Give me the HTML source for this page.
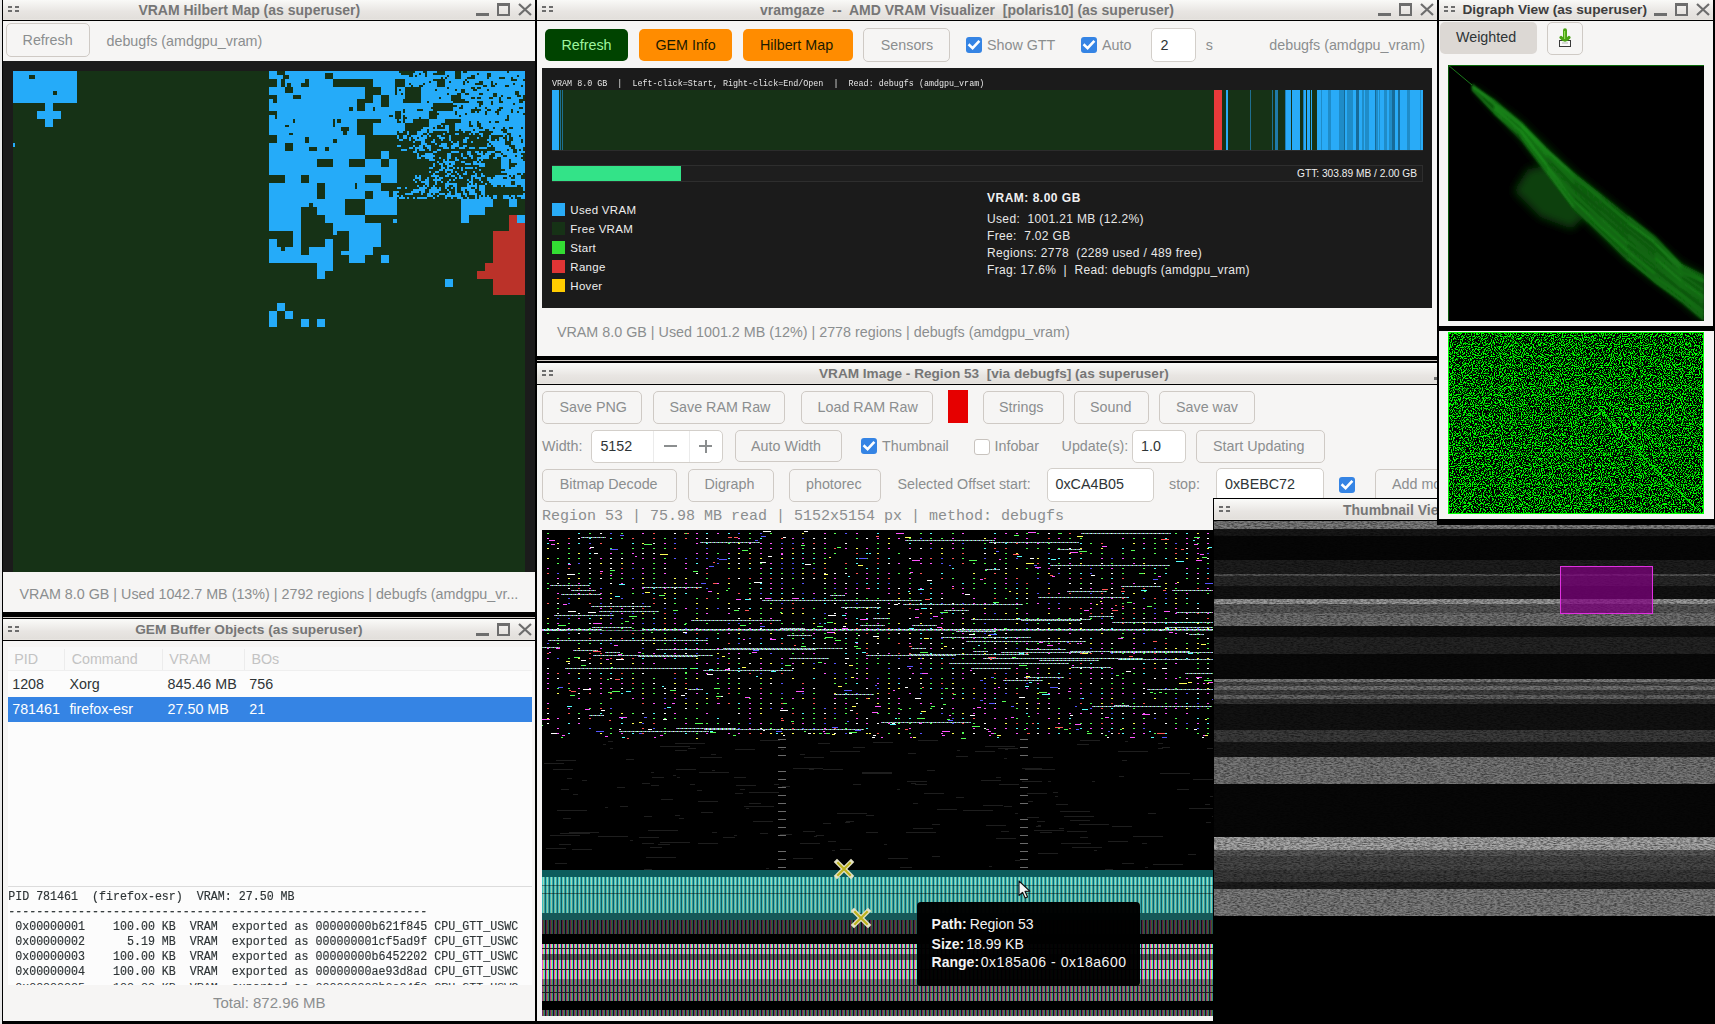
<!DOCTYPE html><html><head><meta charset="utf-8"><style>
html,body{margin:0;padding:0;}
body{width:1715px;height:1024px;overflow:hidden;position:relative;background:#000;font-family:'Liberation Sans',sans-serif;}
.r{position:absolute;}
.t{position:absolute;white-space:pre;line-height:1;}
</style></head><body>
<div class="r" style="left:0px;top:0px;width:2px;height:1024px;background:#e8e8e8;"></div>
<div class="r" style="left:2px;top:0px;width:534px;height:617px;background:#000;"></div>
<div class="r" style="left:3px;top:0px;width:532px;height:612px;background:#f6f5f4;"></div>
<div class="r" style="left:3px;top:-1px;width:532px;height:21px;background:linear-gradient(#fbfbf9,#e8e5e2 60%,#e2dfdb 96%,#efebe7);"></div>
<div class="r" style="left:3px;top:20px;width:532px;height:1px;background:#000;"></div>
<div class="r" style="left:8px;top:6px;width:4px;height:2px;background:#6d6d6d;"></div>
<div class="r" style="left:8px;top:10px;width:4px;height:2px;background:#6d6d6d;"></div>
<div class="r" style="left:15px;top:6px;width:4px;height:2px;background:#6d6d6d;"></div>
<div class="r" style="left:15px;top:10px;width:4px;height:2px;background:#6d6d6d;"></div>
<div class="t" style="left:138.4px;top:2.9px;font-size:14px;color:#767676;font-family:'Liberation Sans', sans-serif;font-weight:bold;">VRAM Hilbert Map (as superuser)</div>
<div class="r" style="left:476px;top:13px;width:13px;height:3px;background:#6d6d6d;"></div>
<div class="r" style="left:497px;top:3px;width:13px;height:13px;box-sizing:border-box;border:2px solid #6d6d6d;border-top-width:3px;"></div>
<svg class="r" style="left:518px;top:3px" width="14" height="13" viewBox="0 0 14 13"><path d="M1 1 L13 12 M13 1 L1 12" stroke="#6d6d6d" stroke-width="2.2"/></svg>
<div class="r" style="left:6px;top:23px;width:84px;height:34px;box-sizing:border-box;border:1px solid #cfcac5;border-radius:5px;background:#f6f5f4;"></div>
<div class="t" style="left:22.6px;top:33.1px;font-size:14.3px;color:#8b8e8f;font-family:'Liberation Sans', sans-serif;">Refresh</div>
<div class="t" style="left:106.5px;top:33.6px;font-size:14.3px;color:#8b8e8f;font-family:'Liberation Sans', sans-serif;">debugfs (amdgpu_vram)</div>
<div class="r" style="left:3px;top:61px;width:532px;height:511px;background:#1b1b1b;"></div>
<svg class="r" style="left:13px;top:71px" width="512" height="501" viewBox="0 0 512 501" shape-rendering="crispEdges"><rect width="512" height="501" fill="#163216"/><path fill="#25abf9" d="M0 0h64v2h-64zM256 0h8v2h-8zM272 0h114v2h-114zM402 0h8v2h-8zM414 0h10v2h-10zM432 0h10v2h-10zM448 0h2v2h-2zM454 0h40v2h-40zM496 0h16v2h-16zM0 2h64v2h-64zM256 2h8v2h-8zM272 2h40v2h-40zM320 2h68v2h-68zM400 2h6v2h-6zM408 2h4v2h-4zM414 2h6v2h-6zM432 2h10v2h-10zM448 2h16v2h-16zM466 2h8v2h-8zM478 2h34v2h-34zM0 4h16v2h-16zM22 4h42v2h-42zM256 4h14v2h-14zM276 4h36v2h-36zM320 4h76v2h-76zM400 4h2v2h-2zM404 4h8v2h-8zM414 4h20v2h-20zM436 4h6v2h-6zM448 4h10v2h-10zM462 4h12v2h-12zM478 4h26v2h-26zM506 4h6v2h-6zM0 6h16v2h-16zM22 6h42v2h-42zM256 6h14v2h-14zM276 6h36v2h-36zM320 6h108v2h-108zM430 6h2v2h-2zM434 6h8v2h-8zM448 6h6v2h-6zM462 6h12v2h-12zM476 6h10v2h-10zM492 6h6v2h-6zM500 6h12v2h-12zM0 8h64v2h-64zM264 8h4v2h-4zM272 8h20v2h-20zM296 8h24v2h-24zM360 8h22v2h-22zM392 8h28v2h-28zM432 8h20v2h-20zM454 8h44v2h-44zM504 8h6v2h-6zM0 10h64v2h-64zM264 10h4v2h-4zM272 10h20v2h-20zM296 10h24v2h-24zM360 10h22v2h-22zM392 10h24v2h-24zM418 10h6v2h-6zM432 10h4v2h-4zM438 10h12v2h-12zM452 10h2v2h-2zM456 10h10v2h-10zM470 10h8v2h-8zM480 10h32v2h-32zM0 12h64v2h-64zM264 12h4v2h-4zM272 12h2v2h-2zM278 12h10v2h-10zM296 12h24v2h-24zM360 12h22v2h-22zM392 12h4v2h-4zM398 12h12v2h-12zM412 12h12v2h-12zM432 12h18v2h-18zM452 12h10v2h-10zM470 12h8v2h-8zM480 12h2v2h-2zM484 12h16v2h-16zM502 12h10v2h-10zM0 14h64v2h-64zM264 14h4v2h-4zM272 14h2v2h-2zM278 14h10v2h-10zM296 14h24v2h-24zM360 14h22v2h-22zM392 14h6v2h-6zM400 14h6v2h-6zM410 14h14v2h-14zM432 14h38v2h-38zM474 14h4v2h-4zM482 14h10v2h-10zM496 14h12v2h-12zM510 14h2v2h-2zM0 16h64v2h-64zM256 16h16v2h-16zM280 16h72v2h-72zM368 16h14v2h-14zM384 16h8v2h-8zM408 16h26v2h-26zM436 16h22v2h-22zM462 16h2v2h-2zM468 16h44v2h-44zM0 18h64v2h-64zM256 18h16v2h-16zM280 18h72v2h-72zM368 18h14v2h-14zM384 18h2v2h-2zM388 18h4v2h-4zM408 18h14v2h-14zM424 18h18v2h-18zM444 18h4v2h-4zM452 18h8v2h-8zM464 18h10v2h-10zM476 18h36v2h-36zM0 20h40v2h-40zM44 20h20v2h-20zM256 20h16v2h-16zM280 20h72v2h-72zM368 20h14v2h-14zM384 20h8v2h-8zM408 20h40v2h-40zM452 20h50v2h-50zM506 20h6v2h-6zM0 22h40v2h-40zM44 22h20v2h-20zM256 22h96v2h-96zM368 22h14v2h-14zM384 22h4v2h-4zM390 22h2v2h-2zM408 22h26v2h-26zM436 22h8v2h-8zM448 22h4v2h-4zM456 22h10v2h-10zM470 22h10v2h-10zM484 22h18v2h-18zM506 22h6v2h-6zM0 24h64v2h-64zM264 24h16v2h-16zM288 24h64v2h-64zM360 24h8v2h-8zM376 24h16v2h-16zM408 24h30v2h-30zM448 24h32v2h-32zM484 24h4v2h-4zM490 24h14v2h-14zM508 24h2v2h-2zM0 26h64v2h-64zM264 26h16v2h-16zM288 26h64v2h-64zM360 26h8v2h-8zM376 26h16v2h-16zM408 26h18v2h-18zM428 26h10v2h-10zM448 26h10v2h-10zM462 26h2v2h-2zM468 26h8v2h-8zM480 26h6v2h-6zM488 26h6v2h-6zM498 26h12v2h-12zM0 28h64v2h-64zM256 28h4v2h-4zM264 28h80v2h-80zM360 28h8v2h-8zM376 28h14v2h-14zM408 28h30v2h-30zM452 28h34v2h-34zM488 28h18v2h-18zM0 30h64v2h-64zM256 30h4v2h-4zM264 30h80v2h-80zM360 30h8v2h-8zM376 30h14v2h-14zM408 30h6v2h-6zM416 30h24v2h-24zM456 30h8v2h-8zM470 30h8v2h-8zM480 30h6v2h-6zM490 30h16v2h-16zM510 30h2v2h-2zM32 32h8v2h-8zM256 32h88v2h-88zM352 32h16v2h-16zM376 32h44v2h-44zM440 32h26v2h-26zM470 32h8v2h-8zM480 32h20v2h-20zM502 32h10v2h-10zM32 34h8v2h-8zM256 34h88v2h-88zM352 34h16v2h-16zM376 34h44v2h-44zM444 34h4v2h-4zM450 34h16v2h-16zM468 34h44v2h-44zM32 36h8v2h-8zM256 36h80v2h-80zM340 36h4v2h-4zM352 36h8v2h-8zM362 36h56v2h-56zM440 36h6v2h-6zM450 36h12v2h-12zM464 36h8v2h-8zM474 36h12v2h-12zM490 36h16v2h-16zM510 36h2v2h-2zM32 38h8v2h-8zM256 38h80v2h-80zM340 38h4v2h-4zM352 38h8v2h-8zM362 38h28v2h-28zM392 38h12v2h-12zM410 38h10v2h-10zM440 38h18v2h-18zM468 38h6v2h-6zM478 38h6v2h-6zM488 38h10v2h-10zM500 38h12v2h-12zM24 40h24v2h-24zM264 40h118v2h-118zM388 40h2v2h-2zM392 40h24v2h-24zM424 40h18v2h-18zM444 40h14v2h-14zM462 40h2v2h-2zM466 40h6v2h-6zM474 40h8v2h-8zM486 40h12v2h-12zM500 40h4v2h-4zM506 40h6v2h-6zM24 42h24v2h-24zM264 42h118v2h-118zM388 42h28v2h-28zM426 42h16v2h-16zM444 42h8v2h-8zM454 42h18v2h-18zM474 42h10v2h-10zM486 42h24v2h-24zM24 44h24v2h-24zM256 44h6v2h-6zM264 44h112v2h-112zM380 44h2v2h-2zM388 44h2v2h-2zM392 44h24v2h-24zM424 44h22v2h-22zM448 44h46v2h-46zM496 44h16v2h-16zM24 46h24v2h-24zM256 46h6v2h-6zM264 46h118v2h-118zM388 46h2v2h-2zM394 46h12v2h-12zM408 46h8v2h-8zM424 46h70v2h-70zM496 46h16v2h-16zM32 48h8v2h-8zM256 48h24v2h-24zM282 48h38v2h-38zM322 48h2v2h-2zM328 48h16v2h-16zM368 48h16v2h-16zM386 48h4v2h-4zM392 48h8v2h-8zM416 48h16v2h-16zM448 48h44v2h-44zM496 48h16v2h-16zM32 50h8v2h-8zM256 50h24v2h-24zM282 50h38v2h-38zM322 50h2v2h-2zM328 50h16v2h-16zM368 50h16v2h-16zM388 50h2v2h-2zM392 50h8v2h-8zM416 50h16v2h-16zM448 50h8v2h-8zM458 50h6v2h-6zM466 50h10v2h-10zM478 50h4v2h-4zM486 50h26v2h-26zM32 52h8v2h-8zM256 52h64v2h-64zM322 52h22v2h-22zM360 52h32v2h-32zM416 52h12v2h-12zM442 52h14v2h-14zM458 52h6v2h-6zM468 52h44v2h-44zM32 54h8v2h-8zM256 54h16v2h-16zM276 54h44v2h-44zM322 54h22v2h-22zM360 54h32v2h-32zM416 54h8v2h-8zM428 54h2v2h-2zM432 54h4v2h-4zM442 54h14v2h-14zM460 54h4v2h-4zM468 54h44v2h-44zM256 56h72v2h-72zM336 56h8v2h-8zM360 56h32v2h-32zM410 56h10v2h-10zM422 56h2v2h-2zM432 56h4v2h-4zM442 56h24v2h-24zM470 56h10v2h-10zM482 56h8v2h-8zM492 56h4v2h-4zM500 56h8v2h-8zM510 56h2v2h-2zM256 58h72v2h-72zM336 58h8v2h-8zM360 58h32v2h-32zM408 58h6v2h-6zM416 58h20v2h-20zM442 58h4v2h-4zM448 58h12v2h-12zM462 58h10v2h-10zM476 58h12v2h-12zM494 58h18v2h-18zM256 60h74v2h-74zM334 60h10v2h-10zM360 60h24v2h-24zM386 60h4v2h-4zM394 60h2v2h-2zM404 60h10v2h-10zM416 60h4v2h-4zM434 60h2v2h-2zM450 60h2v2h-2zM458 60h8v2h-8zM480 60h10v2h-10zM494 60h18v2h-18zM256 62h20v2h-20zM280 62h50v2h-50zM334 62h10v2h-10zM360 62h24v2h-24zM394 62h2v2h-2zM404 62h6v2h-6zM414 62h2v2h-2zM430 62h2v2h-2zM442 62h4v2h-4zM456 62h2v2h-2zM460 62h2v2h-2zM466 62h4v2h-4zM478 62h16v2h-16zM498 62h14v2h-14zM264 64h88v2h-88zM384 64h2v2h-2zM390 64h4v2h-4zM398 64h10v2h-10zM410 64h4v2h-4zM416 64h2v2h-2zM424 64h4v2h-4zM436 64h2v2h-2zM468 64h2v2h-2zM476 64h2v2h-2zM490 64h2v2h-2zM494 64h2v2h-2zM498 64h8v2h-8zM508 64h4v2h-4zM264 66h28v2h-28zM296 66h56v2h-56zM384 66h2v2h-2zM390 66h4v2h-4zM396 66h2v2h-2zM400 66h4v2h-4zM406 66h8v2h-8zM426 66h6v2h-6zM436 66h2v2h-2zM452 66h4v2h-4zM464 66h2v2h-2zM476 66h2v2h-2zM486 66h4v2h-4zM494 66h2v2h-2zM500 66h12v2h-12zM264 68h28v2h-28zM296 68h24v2h-24zM324 68h28v2h-28zM386 68h4v2h-4zM396 68h2v2h-2zM402 68h10v2h-10zM420 68h2v2h-2zM428 68h2v2h-2zM436 68h2v2h-2zM450 68h4v2h-4zM474 68h4v2h-4zM482 68h2v2h-2zM486 68h6v2h-6zM494 68h2v2h-2zM500 68h8v2h-8zM510 68h2v2h-2zM264 70h28v2h-28zM296 70h24v2h-24zM324 70h28v2h-28zM400 70h2v2h-2zM408 70h4v2h-4zM418 70h4v2h-4zM438 70h2v2h-2zM444 70h2v2h-2zM450 70h4v2h-4zM458 70h2v2h-2zM476 70h16v2h-16zM498 70h10v2h-10zM510 70h2v2h-2zM0 72h2v2h-2zM256 72h16v2h-16zM280 72h72v2h-72zM408 72h6v2h-6zM422 72h2v2h-2zM428 72h6v2h-6zM440 72h6v2h-6zM474 72h2v2h-2zM478 72h14v2h-14zM498 72h14v2h-14zM0 74h2v2h-2zM256 74h16v2h-16zM280 74h72v2h-72zM384 74h4v2h-4zM400 74h2v2h-2zM406 74h4v2h-4zM412 74h6v2h-6zM426 74h8v2h-8zM438 74h8v2h-8zM450 74h4v2h-4zM474 74h4v2h-4zM480 74h16v2h-16zM502 74h10v2h-10zM256 76h16v2h-16zM280 76h16v2h-16zM304 76h8v2h-8zM316 76h36v2h-36zM396 76h4v2h-4zM402 76h8v2h-8zM414 76h4v2h-4zM430 76h6v2h-6zM438 76h4v2h-4zM446 76h6v2h-6zM456 76h6v2h-6zM466 76h8v2h-8zM482 76h16v2h-16zM502 76h8v2h-8zM256 78h16v2h-16zM280 78h16v2h-16zM304 78h8v2h-8zM316 78h36v2h-36zM388 78h6v2h-6zM402 78h2v2h-2zM406 78h6v2h-6zM416 78h2v2h-2zM424 78h4v2h-4zM482 78h12v2h-12zM496 78h4v2h-4zM504 78h2v2h-2zM508 78h2v2h-2zM256 80h96v2h-96zM368 80h8v2h-8zM400 80h4v2h-4zM420 80h4v2h-4zM438 80h8v2h-8zM454 80h4v2h-4zM462 80h4v2h-4zM468 80h2v2h-2zM474 80h8v2h-8zM488 80h12v2h-12zM504 80h8v2h-8zM256 82h96v2h-96zM368 82h8v2h-8zM404 82h2v2h-2zM412 82h8v2h-8zM434 82h4v2h-4zM448 82h2v2h-2zM454 82h4v2h-4zM464 82h6v2h-6zM472 82h6v2h-6zM482 82h6v2h-6zM490 82h18v2h-18zM256 84h96v2h-96zM368 84h8v2h-8zM404 84h2v2h-2zM408 84h14v2h-14zM434 84h4v2h-4zM448 84h2v2h-2zM456 84h4v2h-4zM468 84h8v2h-8zM482 84h8v2h-8zM494 84h8v2h-8zM504 84h6v2h-6zM256 86h96v2h-96zM368 86h8v2h-8zM404 86h4v2h-4zM412 86h8v2h-8zM426 86h2v2h-2zM434 86h4v2h-4zM442 86h2v2h-2zM450 86h4v2h-4zM458 86h2v2h-2zM464 86h12v2h-12zM480 86h4v2h-4zM488 86h20v2h-20zM256 88h48v2h-48zM320 88h16v2h-16zM352 88h16v2h-16zM376 88h8v2h-8zM416 88h6v2h-6zM430 88h2v2h-2zM434 88h2v2h-2zM442 88h4v2h-4zM464 88h2v2h-2zM468 88h2v2h-2zM488 88h8v2h-8zM498 88h12v2h-12zM256 90h48v2h-48zM320 90h16v2h-16zM352 90h16v2h-16zM376 90h8v2h-8zM424 90h2v2h-2zM430 90h12v2h-12zM448 90h4v2h-4zM460 90h4v2h-4zM466 90h2v2h-2zM488 90h8v2h-8zM498 90h14v2h-14zM256 92h48v2h-48zM320 92h16v2h-16zM352 92h16v2h-16zM376 92h8v2h-8zM420 92h2v2h-2zM426 92h4v2h-4zM432 92h4v2h-4zM438 92h4v2h-4zM452 92h6v2h-6zM460 92h12v2h-12zM488 92h8v2h-8zM504 92h8v2h-8zM256 94h48v2h-48zM320 94h16v2h-16zM352 94h16v2h-16zM376 94h8v2h-8zM420 94h2v2h-2zM428 94h2v2h-2zM434 94h6v2h-6zM466 94h6v2h-6zM488 94h8v2h-8zM502 94h10v2h-10zM256 96h128v2h-128zM416 96h4v2h-4zM428 96h4v2h-4zM434 96h2v2h-2zM440 96h2v2h-2zM444 96h2v2h-2zM448 96h2v2h-2zM452 96h8v2h-8zM462 96h2v2h-2zM488 96h8v2h-8zM498 96h14v2h-14zM256 98h128v2h-128zM426 98h4v2h-4zM432 98h8v2h-8zM448 98h2v2h-2zM466 98h2v2h-2zM492 98h20v2h-20zM256 100h128v2h-128zM416 100h2v2h-2zM422 100h4v2h-4zM432 100h2v2h-2zM438 100h2v2h-2zM442 100h2v2h-2zM452 100h2v2h-2zM460 100h2v2h-2zM488 100h24v2h-24zM256 102h128v2h-128zM420 102h2v2h-2zM434 102h4v2h-4zM444 102h2v2h-2zM450 102h4v2h-4zM462 102h2v2h-2zM468 102h2v2h-2zM494 102h10v2h-10zM508 102h2v2h-2zM272 104h16v2h-16zM296 104h56v2h-56zM368 104h16v2h-16zM402 104h2v2h-2zM406 104h2v2h-2zM418 104h8v2h-8zM432 104h4v2h-4zM438 104h4v2h-4zM446 104h2v2h-2zM458 104h6v2h-6zM468 104h4v2h-4zM482 104h14v2h-14zM498 104h2v2h-2zM502 104h6v2h-6zM272 106h16v2h-16zM296 106h56v2h-56zM368 106h16v2h-16zM402 106h6v2h-6zM414 106h2v2h-2zM422 106h2v2h-2zM426 106h4v2h-4zM442 106h2v2h-2zM446 106h4v2h-4zM458 106h2v2h-2zM462 106h6v2h-6zM474 106h4v2h-4zM480 106h10v2h-10zM494 106h4v2h-4zM502 106h6v2h-6zM272 108h16v2h-16zM296 108h56v2h-56zM368 108h16v2h-16zM400 108h2v2h-2zM406 108h2v2h-2zM412 108h4v2h-4zM420 108h8v2h-8zM436 108h2v2h-2zM440 108h2v2h-2zM454 108h2v2h-2zM458 108h2v2h-2zM466 108h2v2h-2zM474 108h38v2h-38zM272 110h16v2h-16zM296 110h56v2h-56zM368 110h16v2h-16zM402 110h2v2h-2zM408 110h8v2h-8zM422 110h2v2h-2zM428 110h2v2h-2zM434 110h2v2h-2zM456 110h4v2h-4zM468 110h2v2h-2zM476 110h22v2h-22zM502 110h10v2h-10zM256 112h48v2h-48zM312 112h30v2h-30zM344 112h24v2h-24zM412 112h4v2h-4zM422 112h2v2h-2zM432 112h12v2h-12zM454 112h2v2h-2zM458 112h2v2h-2zM462 112h2v2h-2zM472 112h2v2h-2zM478 112h20v2h-20zM502 112h10v2h-10zM256 114h48v2h-48zM312 114h30v2h-30zM344 114h24v2h-24zM404 114h2v2h-2zM410 114h2v2h-2zM414 114h2v2h-2zM420 114h2v2h-2zM432 114h4v2h-4zM440 114h4v2h-4zM454 114h10v2h-10zM466 114h6v2h-6zM480 114h4v2h-4zM488 114h2v2h-2zM492 114h12v2h-12zM508 114h4v2h-4zM256 116h48v2h-48zM312 116h30v2h-30zM344 116h24v2h-24zM384 116h4v2h-4zM392 116h2v2h-2zM406 116h8v2h-8zM418 116h6v2h-6zM426 116h2v2h-2zM432 116h2v2h-2zM438 116h2v2h-2zM442 116h2v2h-2zM448 116h10v2h-10zM462 116h2v2h-2zM466 116h6v2h-6zM510 116h2v2h-2zM256 118h48v2h-48zM312 118h56v2h-56zM400 118h12v2h-12zM416 118h12v2h-12zM434 118h2v2h-2zM442 118h2v2h-2zM448 118h4v2h-4zM454 118h8v2h-8zM466 118h6v2h-6zM510 118h2v2h-2zM256 120h48v2h-48zM312 120h40v2h-40zM360 120h16v2h-16zM380 120h6v2h-6zM398 120h8v2h-8zM408 120h4v2h-4zM416 120h10v2h-10zM436 120h2v2h-2zM442 120h2v2h-2zM450 120h2v2h-2zM456 120h6v2h-6zM468 120h4v2h-4zM256 122h48v2h-48zM312 122h40v2h-40zM360 122h16v2h-16zM380 122h4v2h-4zM392 122h8v2h-8zM408 122h2v2h-2zM414 122h4v2h-4zM420 122h2v2h-2zM426 122h6v2h-6zM434 122h4v2h-4zM442 122h6v2h-6zM450 122h4v2h-4zM456 122h8v2h-8zM468 122h4v2h-4zM510 122h2v2h-2zM256 124h48v2h-48zM312 124h40v2h-40zM360 124h16v2h-16zM380 124h6v2h-6zM388 124h2v2h-2zM414 124h6v2h-6zM424 124h2v2h-2zM432 124h16v2h-16zM452 124h2v2h-2zM462 124h2v2h-2zM466 124h2v2h-2zM470 124h2v2h-2zM474 124h2v2h-2zM480 124h4v2h-4zM490 124h6v2h-6zM498 124h4v2h-4zM504 124h8v2h-8zM256 126h48v2h-48zM312 126h40v2h-40zM360 126h24v2h-24zM386 126h6v2h-6zM394 126h2v2h-2zM400 126h2v2h-2zM404 126h10v2h-10zM420 126h2v2h-2zM432 126h2v2h-2zM438 126h2v2h-2zM444 126h6v2h-6zM454 126h2v2h-2zM462 126h2v2h-2zM466 126h12v2h-12zM480 126h4v2h-4zM490 126h8v2h-8zM500 126h2v2h-2zM508 126h4v2h-4zM256 128h76v4h-76zM352 128h32v4h-32zM448 128h32v4h-32zM496 128h8v4h-8zM256 132h40v4h-40zM300 132h32v4h-32zM352 132h32v4h-32zM448 132h32v4h-32zM496 132h8v4h-8zM256 136h32v8h-32zM304 136h28v8h-28zM352 136h32v8h-32zM448 136h24v8h-24zM256 144h32v4h-32zM312 144h40v4h-40zM448 144h8v4h-8zM504 144h8v4h-8zM256 148h32v4h-32zM312 148h40v4h-40zM380 148h4v4h-4zM448 148h8v4h-8zM504 148h8v4h-8zM256 152h32v8h-32zM320 152h48v8h-48zM280 160h8v4h-8zM320 160h4v4h-4zM336 160h32v4h-32zM280 164h8v4h-8zM336 164h32v4h-32zM256 168h8v8h-8zM280 168h8v8h-8zM312 168h8v8h-8zM336 168h32v8h-32zM256 176h12v4h-12zM272 176h16v4h-16zM296 176h24v4h-24zM336 176h24v4h-24zM256 180h32v4h-32zM296 180h24v4h-24zM328 180h32v4h-32zM256 184h64v8h-64zM336 184h16v8h-16zM368 184h8v8h-8zM304 192h16v8h-16zM304 200h8v8h-8zM432 208h8v8h-8zM264 232h8v8h-8zM256 240h8v8h-8zM272 240h8v8h-8zM256 248h8v8h-8zM288 248h8v8h-8zM304 248h8v8h-8z"/><path fill="#bb3229" d="M496 144h8v4h-8zM496 148h8v4h-8zM496 152h16v8h-16zM480 160h32v4h-32zM480 164h32v4h-32zM480 168h32v8h-32zM480 176h32v4h-32zM480 180h32v4h-32zM480 184h32v8h-32zM472 192h40v8h-40zM464 200h48v8h-48zM480 208h32v8h-32zM480 216h32v8h-32z"/></svg>
<div class="t" style="left:19.5px;top:586.9px;font-size:14.32px;color:#8b8e8f;font-family:'Liberation Sans', sans-serif;">VRAM 8.0 GB | Used 1042.7 MB (13%) | 2792 regions | debugfs (amdgpu_vr...</div>
<div class="r" style="left:2px;top:612px;width:534px;height:412px;background:#000;"></div>
<div class="r" style="left:3px;top:617px;width:532px;height:1px;background:#cfcac5;"></div>
<div class="r" style="left:3px;top:619px;width:532px;height:402px;background:#f6f5f4;"></div>
<div class="r" style="left:3px;top:619px;width:532px;height:21px;background:linear-gradient(#fbfbf9,#e8e5e2 60%,#e2dfdb 96%,#efebe7);"></div>
<div class="r" style="left:3px;top:640px;width:532px;height:1px;background:#000;"></div>
<div class="r" style="left:8px;top:626px;width:4px;height:2px;background:#6d6d6d;"></div>
<div class="r" style="left:8px;top:630px;width:4px;height:2px;background:#6d6d6d;"></div>
<div class="r" style="left:15px;top:626px;width:4px;height:2px;background:#6d6d6d;"></div>
<div class="r" style="left:15px;top:630px;width:4px;height:2px;background:#6d6d6d;"></div>
<div class="t" style="left:135.2px;top:623.2px;font-size:13.7px;color:#767676;font-family:'Liberation Sans', sans-serif;font-weight:bold;">GEM Buffer Objects (as superuser)</div>
<div class="r" style="left:476px;top:633px;width:13px;height:3px;background:#6d6d6d;"></div>
<div class="r" style="left:497px;top:623px;width:13px;height:13px;box-sizing:border-box;border:2px solid #6d6d6d;border-top-width:3px;"></div>
<svg class="r" style="left:518px;top:623px" width="14" height="13" viewBox="0 0 14 13"><path d="M1 1 L13 12 M13 1 L1 12" stroke="#6d6d6d" stroke-width="2.2"/></svg>
<div class="r" style="left:8px;top:647px;width:524px;height:239px;background:#fcfcfc;"></div>
<div class="r" style="left:8px;top:647px;width:524px;height:24px;background:#f9f9f9;border-bottom:1px solid #efefef;box-sizing:border-box;"></div>
<div class="r" style="left:64px;top:649px;width:1px;height:21px;background:#ececec;"></div>
<div class="r" style="left:162px;top:649px;width:1px;height:21px;background:#ececec;"></div>
<div class="r" style="left:244px;top:649px;width:1px;height:21px;background:#ececec;"></div>
<div class="t" style="left:14.3px;top:651.5px;font-size:14.3px;color:#c3c3c3;font-family:'Liberation Sans', sans-serif;">PID</div>
<div class="t" style="left:71.7px;top:651.5px;font-size:14.3px;color:#c3c3c3;font-family:'Liberation Sans', sans-serif;">Command</div>
<div class="t" style="left:169.3px;top:651.5px;font-size:14.3px;color:#c3c3c3;font-family:'Liberation Sans', sans-serif;">VRAM</div>
<div class="t" style="left:251.4px;top:651.5px;font-size:14.3px;color:#c3c3c3;font-family:'Liberation Sans', sans-serif;">BOs</div>
<div class="t" style="left:12.2px;top:677.4px;font-size:14.3px;color:#2e3436;font-family:'Liberation Sans', sans-serif;">1208</div>
<div class="t" style="left:69.4px;top:677.4px;font-size:14.3px;color:#2e3436;font-family:'Liberation Sans', sans-serif;">Xorg</div>
<div class="t" style="left:167.6px;top:677.4px;font-size:14.3px;color:#2e3436;font-family:'Liberation Sans', sans-serif;">845.46 MB</div>
<div class="t" style="left:249.3px;top:677.4px;font-size:14.3px;color:#2e3436;font-family:'Liberation Sans', sans-serif;">756</div>
<div class="r" style="left:8px;top:697px;width:524px;height:25px;background:#3584e4;"></div>
<div class="t" style="left:12.2px;top:702.2px;font-size:14.3px;color:#ffffff;font-family:'Liberation Sans', sans-serif;">781461</div>
<div class="t" style="left:69.4px;top:702.2px;font-size:14.3px;color:#ffffff;font-family:'Liberation Sans', sans-serif;">firefox-esr</div>
<div class="t" style="left:167.6px;top:702.2px;font-size:14.3px;color:#ffffff;font-family:'Liberation Sans', sans-serif;">27.50 MB</div>
<div class="t" style="left:249.3px;top:702.2px;font-size:14.3px;color:#ffffff;font-family:'Liberation Sans', sans-serif;">21</div>
<div class="r" style="left:8px;top:886px;width:524px;height:1px;background:#dcdcdc;"></div>
<div class="r" style="left:8px;top:887px;width:524px;height:98px;background:#fcfcfc;overflow:hidden;"></div>
<div class="t" style="left:8.2px;top:890.8px;font-size:11.65px;color:#2e3436;font-family:'Liberation Mono', monospace;transform:scaleY(1.12);transform-origin:0 77%;-webkit-text-stroke:0.15px #2e3436;">PID 781461  (firefox-esr)  VRAM: 27.50 MB</div>
<div class="t" style="left:8.2px;top:905.6px;font-size:11.65px;color:#2e3436;font-family:'Liberation Mono', monospace;transform:scaleY(1.12);transform-origin:0 77%;-webkit-text-stroke:0.15px #2e3436;">------------------------------------------------------------</div>
<div class="t" style="left:8.2px;top:920.7px;font-size:11.65px;color:#2e3436;font-family:'Liberation Mono', monospace;transform:scaleY(1.12);transform-origin:0 77%;-webkit-text-stroke:0.15px #2e3436;"> 0x00000001    100.00 KB  VRAM  exported as 00000000b621f845 CPU_GTT_USWC</div>
<div class="t" style="left:8.2px;top:935.7px;font-size:11.65px;color:#2e3436;font-family:'Liberation Mono', monospace;transform:scaleY(1.12);transform-origin:0 77%;-webkit-text-stroke:0.15px #2e3436;"> 0x00000002      5.19 MB  VRAM  exported as 000000001cf5ad9f CPU_GTT_USWC</div>
<div class="t" style="left:8.2px;top:950.7px;font-size:11.65px;color:#2e3436;font-family:'Liberation Mono', monospace;transform:scaleY(1.12);transform-origin:0 77%;-webkit-text-stroke:0.15px #2e3436;"> 0x00000003    100.00 KB  VRAM  exported as 00000000b6452202 CPU_GTT_USWC</div>
<div class="t" style="left:8.2px;top:965.7px;font-size:11.65px;color:#2e3436;font-family:'Liberation Mono', monospace;transform:scaleY(1.12);transform-origin:0 77%;-webkit-text-stroke:0.15px #2e3436;"> 0x00000004    100.00 KB  VRAM  exported as 00000000ae93d8ad CPU_GTT_USWC</div>
<div class="r" style="left:8px;top:975px;width:524px;height:10px;overflow:hidden;">
<div class="t" style="left:0.2px;top:5.7px;font-size:11.65px;color:#2e3436;font-family:'Liberation Mono',monospace;"> 0x00000005    100.00 KB  VRAM  exported as 000000003b0e04f0 CPU_GTT_USWC</div>
</div>
<div class="t" style="left:213.0px;top:994.8px;font-size:15px;color:#8b8e8f;font-family:'Liberation Sans', sans-serif;">Total: 872.96 MB</div>
<div class="r" style="left:536px;top:0px;width:902px;height:362px;background:#000;"></div>
<div class="r" style="left:537px;top:0px;width:900px;height:356px;background:#f6f5f4;"></div>
<div class="r" style="left:537px;top:360px;width:900px;height:1px;background:#cfcac5;"></div>
<div class="r" style="left:537px;top:-1px;width:900px;height:21px;background:linear-gradient(#fbfbf9,#e8e5e2 60%,#e2dfdb 96%,#efebe7);"></div>
<div class="r" style="left:537px;top:20px;width:900px;height:1px;background:#000;"></div>
<div class="r" style="left:542px;top:6px;width:4px;height:2px;background:#6d6d6d;"></div>
<div class="r" style="left:542px;top:10px;width:4px;height:2px;background:#6d6d6d;"></div>
<div class="r" style="left:549px;top:6px;width:4px;height:2px;background:#6d6d6d;"></div>
<div class="r" style="left:549px;top:10px;width:4px;height:2px;background:#6d6d6d;"></div>
<div class="t" style="left:760.0px;top:2.9px;font-size:14px;color:#767676;font-family:'Liberation Sans', sans-serif;font-weight:bold;">vramgaze  --  AMD VRAM Visualizer  [polaris10] (as superuser)</div>
<div class="r" style="left:1378px;top:13px;width:13px;height:3px;background:#6d6d6d;"></div>
<div class="r" style="left:1399px;top:3px;width:13px;height:13px;box-sizing:border-box;border:2px solid #6d6d6d;border-top-width:3px;"></div>
<svg class="r" style="left:1420px;top:3px" width="14" height="13" viewBox="0 0 14 13"><path d="M1 1 L13 12 M13 1 L1 12" stroke="#6d6d6d" stroke-width="2.2"/></svg>
<div class="r" style="left:545px;top:29px;width:83px;height:32px;background:#004400;border-radius:5px;"></div>
<div class="t" style="left:561.5px;top:38.2px;font-size:14.3px;color:#9ef59e;font-family:'Liberation Sans', sans-serif;">Refresh</div>
<div class="r" style="left:639px;top:29px;width:93px;height:32px;background:#ff8c00;border-radius:5px;"></div>
<div class="t" style="left:655.4px;top:38.2px;font-size:14.3px;color:#1a1a00;font-family:'Liberation Sans', sans-serif;">GEM Info</div>
<div class="r" style="left:743px;top:29px;width:110px;height:32px;background:#ff8c00;border-radius:5px;"></div>
<div class="t" style="left:760.0px;top:38.2px;font-size:14.3px;color:#1a1a00;font-family:'Liberation Sans', sans-serif;">Hilbert Map</div>
<div class="r" style="left:863px;top:28px;width:87px;height:34px;box-sizing:border-box;border:1px solid #cfcac5;border-radius:5px;background:#f6f5f4;"></div>
<div class="t" style="left:880.8px;top:38.2px;font-size:14.3px;color:#8b8e8f;font-family:'Liberation Sans', sans-serif;">Sensors</div>
<svg class="r" style="left:966px;top:37px" width="16" height="16" viewBox="0 0 16 16"><rect x="0" y="0" width="16" height="16" rx="3" fill="#3584e4"/><path d="M3.5 8.2 L6.6 11.2 L12.5 4.8" stroke="#fff" stroke-width="2.6" fill="none" stroke-linecap="square"/></svg>
<div class="t" style="left:987.0px;top:38.2px;font-size:14.3px;color:#8b8e8f;font-family:'Liberation Sans', sans-serif;">Show GTT</div>
<svg class="r" style="left:1081px;top:37px" width="16" height="16" viewBox="0 0 16 16"><rect x="0" y="0" width="16" height="16" rx="3" fill="#3584e4"/><path d="M3.5 8.2 L6.6 11.2 L12.5 4.8" stroke="#fff" stroke-width="2.6" fill="none" stroke-linecap="square"/></svg>
<div class="t" style="left:1102.0px;top:38.2px;font-size:14.3px;color:#8b8e8f;font-family:'Liberation Sans', sans-serif;">Auto</div>
<div class="r" style="left:1151px;top:28px;width:45px;height:34px;box-sizing:border-box;border:1px solid #d3cfca;border-radius:5px;background:#fff;"></div>
<div class="t" style="left:1160.5px;top:38.2px;font-size:14.3px;color:#2e3436;font-family:'Liberation Sans', sans-serif;">2</div>
<div class="t" style="left:1205.7px;top:38.2px;font-size:14.3px;color:#8b8e8f;font-family:'Liberation Sans', sans-serif;">s</div>
<div class="t" style="left:1269.3px;top:37.9px;font-size:14.3px;color:#8b8e8f;font-family:'Liberation Sans', sans-serif;">debugfs (amdgpu_vram)</div>
<div class="r" style="left:542px;top:68px;width:890px;height:240px;background:#1b1b1b;"></div>
<div class="t" style="left:552.0px;top:79.6px;font-size:8.4px;color:#e6e6e6;font-family:'Liberation Mono', monospace;transform:scaleY(1.15);transform-origin:0 80%;">VRAM 8.0 GB  |  Left-click=Start, Right-click=End/Open  |  Read: debugfs (amdgpu_vram)</div>
<div class="r" style="left:552px;top:90px;width:871px;height:60px;background:#163216;box-shadow:0 1px 0 #2c2c2c;"></div>
<svg class="r" style="left:552px;top:90px" width="871" height="60" shape-rendering="crispEdges"><rect x="0" y="0" width="7" height="60" fill="#29abf7"/><rect x="8" y="0" width="1" height="60" fill="#1d6f8f"/><rect x="10" y="0" width="1" height="60" fill="#1d6f8f"/><rect x="662" y="0" width="8" height="60" fill="#e83a3a"/><rect x="674" y="0" width="1.5" height="60" fill="#29abf7"/><rect x="698" y="0" width="1" height="60" fill="#1f6f90"/><rect x="720" y="0" width="1" height="60" fill="#1f6f90"/><rect x="723" y="0" width="3" height="60" fill="#1f7aa8"/><rect x="733" y="0" width="1" height="60" fill="#1c7fb8"/><rect x="734" y="0" width="1" height="60" fill="#29abf7"/><rect x="735" y="0" width="2" height="60" fill="#29abf7"/><rect x="737" y="0" width="2" height="60" fill="#29abf7"/><rect x="740" y="0" width="2" height="60" fill="#29abf7"/><rect x="742" y="0" width="1" height="60" fill="#29abf7"/><rect x="743" y="0" width="3" height="60" fill="#29abf7"/><rect x="746" y="0" width="2" height="60" fill="#29abf7"/><rect x="751" y="0" width="1" height="60" fill="#1c7fb8"/><rect x="752" y="0" width="2" height="60" fill="#29abf7"/><rect x="755" y="0" width="1" height="60" fill="#29abf7"/><rect x="756" y="0" width="2" height="60" fill="#29abf7"/><rect x="759" y="0" width="1" height="60" fill="#29abf7"/><rect x="765" y="0" width="2" height="60" fill="#29abf7"/><rect x="767" y="0" width="2" height="60" fill="#29abf7"/><rect x="769" y="0" width="1" height="60" fill="#1f8cc8"/><rect x="770" y="0" width="1" height="60" fill="#29abf7"/><rect x="771" y="0" width="2" height="60" fill="#29abf7"/><rect x="773" y="0" width="3" height="60" fill="#29abf7"/><rect x="776" y="0" width="3" height="60" fill="#1f8cc8"/><rect x="779" y="0" width="2" height="60" fill="#29abf7"/><rect x="781" y="0" width="2" height="60" fill="#29abf7"/><rect x="783" y="0" width="2" height="60" fill="#29abf7"/><rect x="785" y="0" width="2" height="60" fill="#29abf7"/><rect x="787" y="0" width="1" height="60" fill="#1f8cc8"/><rect x="788" y="0" width="1" height="60" fill="#1f8cc8"/><rect x="789" y="0" width="2" height="60" fill="#1f8cc8"/><rect x="791" y="0" width="1" height="60" fill="#1f8cc8"/><rect x="792" y="0" width="1" height="60" fill="#176a98"/><rect x="793" y="0" width="2" height="60" fill="#29abf7"/><rect x="795" y="0" width="3" height="60" fill="#1f8cc8"/><rect x="798" y="0" width="3" height="60" fill="#1f8cc8"/><rect x="801" y="0" width="2" height="60" fill="#29abf7"/><rect x="803" y="0" width="1" height="60" fill="#29abf7"/><rect x="804" y="0" width="3" height="60" fill="#176a98"/><rect x="807" y="0" width="1" height="60" fill="#29abf7"/><rect x="808" y="0" width="1" height="60" fill="#29abf7"/><rect x="809" y="0" width="1" height="60" fill="#29abf7"/><rect x="810" y="0" width="2" height="60" fill="#1f8cc8"/><rect x="812" y="0" width="1" height="60" fill="#29abf7"/><rect x="813" y="0" width="2" height="60" fill="#1f8cc8"/><rect x="815" y="0" width="2" height="60" fill="#1f8cc8"/><rect x="817" y="0" width="1" height="60" fill="#29abf7"/><rect x="818" y="0" width="1" height="60" fill="#29abf7"/><rect x="819" y="0" width="1" height="60" fill="#29abf7"/><rect x="820" y="0" width="1" height="60" fill="#29abf7"/><rect x="821" y="0" width="2" height="60" fill="#29abf7"/><rect x="823" y="0" width="1" height="60" fill="#176a98"/><rect x="824" y="0" width="1" height="60" fill="#1f8cc8"/><rect x="825" y="0" width="1" height="60" fill="#1f8cc8"/><rect x="826" y="0" width="1" height="60" fill="#29abf7"/><rect x="827" y="0" width="1" height="60" fill="#1f8cc8"/><rect x="828" y="0" width="2" height="60" fill="#29abf7"/><rect x="830" y="0" width="2" height="60" fill="#29abf7"/><rect x="832" y="0" width="2" height="60" fill="#1f8cc8"/><rect x="834" y="0" width="1" height="60" fill="#1f8cc8"/><rect x="835" y="0" width="2" height="60" fill="#29abf7"/><rect x="837" y="0" width="3" height="60" fill="#1f8cc8"/><rect x="840" y="0" width="1" height="60" fill="#176a98"/><rect x="841" y="0" width="2" height="60" fill="#176a98"/><rect x="843" y="0" width="2" height="60" fill="#29abf7"/><rect x="845" y="0" width="1" height="60" fill="#29abf7"/><rect x="846" y="0" width="2" height="60" fill="#176a98"/><rect x="848" y="0" width="1" height="60" fill="#29abf7"/><rect x="849" y="0" width="2" height="60" fill="#29abf7"/><rect x="851" y="0" width="1" height="60" fill="#29abf7"/><rect x="852" y="0" width="3" height="60" fill="#29abf7"/><rect x="855" y="0" width="1" height="60" fill="#1f8cc8"/><rect x="856" y="0" width="1" height="60" fill="#1f8cc8"/><rect x="857" y="0" width="1" height="60" fill="#1f8cc8"/><rect x="858" y="0" width="1" height="60" fill="#29abf7"/><rect x="859" y="0" width="3" height="60" fill="#29abf7"/><rect x="862" y="0" width="1" height="60" fill="#29abf7"/><rect x="863" y="0" width="2" height="60" fill="#29abf7"/><rect x="865" y="0" width="2" height="60" fill="#29abf7"/><rect x="867" y="0" width="1" height="60" fill="#29abf7"/><rect x="868" y="0" width="1" height="60" fill="#1f8cc8"/><rect x="869" y="0" width="1" height="60" fill="#29abf7"/><rect x="870" y="0" width="1" height="60" fill="#29abf7"/></svg>
<div class="r" style="left:552px;top:165px;width:871px;height:17px;box-sizing:border-box;border:1px solid #2e2e2e;background:#1e1e1e;"></div>
<div class="r" style="left:552px;top:166px;width:129px;height:15px;background:#33e388;"></div>
<div class="t" style="left:1297.0px;top:169.4px;font-size:10.2px;color:#eeeeee;font-family:'Liberation Sans', sans-serif;">GTT: 303.89 MB / 2.00 GB</div>
<div class="r" style="left:552px;top:203px;width:13px;height:13px;background:#29abf7;"></div>
<div class="t" style="left:570.3px;top:205.3px;font-size:11.5px;color:#eeeeee;font-family:'Liberation Sans', sans-serif;letter-spacing:0.3px;">Used VRAM</div>
<div class="r" style="left:552px;top:222px;width:13px;height:13px;background:#163216;"></div>
<div class="t" style="left:570.3px;top:224.3px;font-size:11.5px;color:#eeeeee;font-family:'Liberation Sans', sans-serif;letter-spacing:0.3px;">Free VRAM</div>
<div class="r" style="left:552px;top:241px;width:13px;height:13px;background:#33dd33;"></div>
<div class="t" style="left:570.3px;top:243.3px;font-size:11.5px;color:#eeeeee;font-family:'Liberation Sans', sans-serif;letter-spacing:0.3px;">Start</div>
<div class="r" style="left:552px;top:260px;width:13px;height:13px;background:#e03535;"></div>
<div class="t" style="left:570.3px;top:262.3px;font-size:11.5px;color:#eeeeee;font-family:'Liberation Sans', sans-serif;letter-spacing:0.3px;">Range</div>
<div class="r" style="left:552px;top:279px;width:13px;height:13px;background:#ffcc00;"></div>
<div class="t" style="left:570.3px;top:281.3px;font-size:11.5px;color:#eeeeee;font-family:'Liberation Sans', sans-serif;letter-spacing:0.3px;">Hover</div>
<div class="t" style="left:987.0px;top:192.4px;font-size:12px;color:#f0f0f0;font-family:'Liberation Sans', sans-serif;font-weight:bold;letter-spacing:0.5px;">VRAM: 8.00 GB</div>
<div class="t" style="left:987.0px;top:213.1px;font-size:12px;color:#e8e8e8;font-family:'Liberation Sans', sans-serif;letter-spacing:0.35px;">Used:  1001.21 MB (12.2%)</div>
<div class="t" style="left:987.0px;top:230.1px;font-size:12px;color:#e8e8e8;font-family:'Liberation Sans', sans-serif;letter-spacing:0.35px;">Free:  7.02 GB</div>
<div class="t" style="left:987.0px;top:247.1px;font-size:12px;color:#e8e8e8;font-family:'Liberation Sans', sans-serif;letter-spacing:0.35px;">Regions: 2778  (2289 used / 489 free)</div>
<div class="t" style="left:987.0px;top:264.1px;font-size:12px;color:#e8e8e8;font-family:'Liberation Sans', sans-serif;letter-spacing:0.35px;">Frag: 17.6%  |  Read: debugfs (amdgpu_vram)</div>
<div class="t" style="left:556.9px;top:324.6px;font-size:14.33px;color:#8b8e8f;font-family:'Liberation Sans', sans-serif;">VRAM 8.0 GB | Used 1001.2 MB (12%) | 2778 regions | debugfs (amdgpu_vram)</div>
<div class="r" style="left:536px;top:361px;width:902px;height:663px;background:#000;"></div>
<div class="r" style="left:537px;top:363px;width:900px;height:658px;background:#f6f5f4;"></div>
<div class="r" style="left:537px;top:363px;width:900px;height:21px;background:linear-gradient(#fbfbf9,#e8e5e2 60%,#e2dfdb 96%,#efebe7);"></div>
<div class="r" style="left:537px;top:384px;width:900px;height:1px;background:#000;"></div>
<div class="r" style="left:542px;top:370px;width:4px;height:2px;background:#6d6d6d;"></div>
<div class="r" style="left:542px;top:374px;width:4px;height:2px;background:#6d6d6d;"></div>
<div class="r" style="left:549px;top:370px;width:4px;height:2px;background:#6d6d6d;"></div>
<div class="r" style="left:549px;top:374px;width:4px;height:2px;background:#6d6d6d;"></div>
<div class="t" style="left:819.0px;top:367.3px;font-size:13.6px;color:#767676;font-family:'Liberation Sans', sans-serif;font-weight:bold;">VRAM Image - Region 53  [via debugfs] (as superuser)</div>
<div class="r" style="left:1434px;top:377px;width:13px;height:3px;background:#6d6d6d;"></div>
<div class="r" style="left:1455px;top:367px;width:13px;height:13px;box-sizing:border-box;border:2px solid #6d6d6d;border-top-width:3px;"></div>
<svg class="r" style="left:1476px;top:367px" width="14" height="13" viewBox="0 0 14 13"><path d="M1 1 L13 12 M13 1 L1 12" stroke="#6d6d6d" stroke-width="2.2"/></svg>
<div class="r" style="left:542px;top:391px;width:100px;height:33px;box-sizing:border-box;border:1px solid #cfcac5;border-radius:5px;background:#f6f5f4;"></div>
<div class="t" style="left:559.4px;top:399.9px;font-size:14.3px;color:#8b8e8f;font-family:'Liberation Sans', sans-serif;">Save PNG</div>
<div class="r" style="left:653px;top:391px;width:132px;height:33px;box-sizing:border-box;border:1px solid #cfcac5;border-radius:5px;background:#f6f5f4;"></div>
<div class="t" style="left:669.5px;top:399.9px;font-size:14.3px;color:#8b8e8f;font-family:'Liberation Sans', sans-serif;">Save RAM Raw</div>
<div class="r" style="left:801px;top:391px;width:132px;height:33px;box-sizing:border-box;border:1px solid #cfcac5;border-radius:5px;background:#f6f5f4;"></div>
<div class="t" style="left:817.6px;top:399.9px;font-size:14.3px;color:#8b8e8f;font-family:'Liberation Sans', sans-serif;">Load RAM Raw</div>
<div class="r" style="left:948px;top:390px;width:20px;height:33px;background:#e60000;"></div>
<div class="r" style="left:983px;top:391px;width:81px;height:33px;box-sizing:border-box;border:1px solid #cfcac5;border-radius:5px;background:#f6f5f4;"></div>
<div class="t" style="left:999.0px;top:399.9px;font-size:14.3px;color:#8b8e8f;font-family:'Liberation Sans', sans-serif;">Strings</div>
<div class="r" style="left:1074px;top:391px;width:75px;height:33px;box-sizing:border-box;border:1px solid #cfcac5;border-radius:5px;background:#f6f5f4;"></div>
<div class="t" style="left:1090.0px;top:399.9px;font-size:14.3px;color:#8b8e8f;font-family:'Liberation Sans', sans-serif;">Sound</div>
<div class="r" style="left:1159px;top:391px;width:96px;height:33px;box-sizing:border-box;border:1px solid #cfcac5;border-radius:5px;background:#f6f5f4;"></div>
<div class="t" style="left:1176.0px;top:399.9px;font-size:14.3px;color:#8b8e8f;font-family:'Liberation Sans', sans-serif;">Save wav</div>
<div class="t" style="left:542.0px;top:438.9px;font-size:14.3px;color:#8b8e8f;font-family:'Liberation Sans', sans-serif;">Width:</div>
<div class="r" style="left:591px;top:430px;width:132px;height:33px;box-sizing:border-box;border:1px solid #d3cfca;border-radius:5px;background:#fff;"></div>
<div class="r" style="left:653px;top:431px;width:1px;height:31px;background:#ebebeb;"></div>
<div class="r" style="left:689px;top:431px;width:1px;height:31px;background:#ebebeb;"></div>
<div class="t" style="left:600.4px;top:438.9px;font-size:14.3px;color:#2e3436;font-family:'Liberation Sans', sans-serif;">5152</div>
<div class="r" style="left:664px;top:445px;width:13px;height:2px;background:#8b8e8f;"></div>
<div class="r" style="left:699px;top:445px;width:13px;height:2px;background:#8b8e8f;"></div>
<div class="r" style="left:704.5px;top:439.5px;width:2.0px;height:13.0px;background:#8b8e8f;"></div>
<div class="r" style="left:735px;top:430px;width:107px;height:32px;box-sizing:border-box;border:1px solid #cfcac5;border-radius:5px;background:#f6f5f4;"></div>
<div class="t" style="left:751.0px;top:438.9px;font-size:14.3px;color:#8b8e8f;font-family:'Liberation Sans', sans-serif;">Auto Width</div>
<svg class="r" style="left:861px;top:438px" width="16" height="16" viewBox="0 0 16 16"><rect x="0" y="0" width="16" height="16" rx="3" fill="#3584e4"/><path d="M3.5 8.2 L6.6 11.2 L12.5 4.8" stroke="#fff" stroke-width="2.6" fill="none" stroke-linecap="square"/></svg>
<div class="t" style="left:882.0px;top:438.9px;font-size:14.3px;color:#8b8e8f;font-family:'Liberation Sans', sans-serif;">Thumbnail</div>
<div class="r" style="left:974px;top:439px;width:16px;height:16px;box-sizing:border-box;border:1px solid #c8c3be;border-radius:3px;background:#fff;"></div>
<div class="t" style="left:994.5px;top:438.9px;font-size:14.3px;color:#8b8e8f;font-family:'Liberation Sans', sans-serif;">Infobar</div>
<div class="t" style="left:1061.6px;top:438.9px;font-size:14.3px;color:#8b8e8f;font-family:'Liberation Sans', sans-serif;">Update(s):</div>
<div class="r" style="left:1132px;top:430px;width:54px;height:33px;box-sizing:border-box;border:1px solid #d3cfca;border-radius:5px;background:#fff;"></div>
<div class="t" style="left:1141.0px;top:438.9px;font-size:14.3px;color:#2e3436;font-family:'Liberation Sans', sans-serif;">1.0</div>
<div class="r" style="left:1196px;top:430px;width:129px;height:33px;box-sizing:border-box;border:1px solid #cfcac5;border-radius:5px;background:#f6f5f4;"></div>
<div class="t" style="left:1213.0px;top:438.9px;font-size:14.3px;color:#8b8e8f;font-family:'Liberation Sans', sans-serif;">Start Updating</div>
<div class="r" style="left:542px;top:469px;width:135px;height:33px;box-sizing:border-box;border:1px solid #cfcac5;border-radius:5px;background:#f6f5f4;"></div>
<div class="t" style="left:559.8px;top:477.3px;font-size:14.3px;color:#8b8e8f;font-family:'Liberation Sans', sans-serif;">Bitmap Decode</div>
<div class="r" style="left:688px;top:469px;width:86px;height:33px;box-sizing:border-box;border:1px solid #cfcac5;border-radius:5px;background:#f6f5f4;"></div>
<div class="t" style="left:704.4px;top:477.3px;font-size:14.3px;color:#8b8e8f;font-family:'Liberation Sans', sans-serif;">Digraph</div>
<div class="r" style="left:789px;top:469px;width:92px;height:33px;box-sizing:border-box;border:1px solid #cfcac5;border-radius:5px;background:#f6f5f4;"></div>
<div class="t" style="left:806.0px;top:477.3px;font-size:14.3px;color:#8b8e8f;font-family:'Liberation Sans', sans-serif;">photorec</div>
<div class="t" style="left:897.5px;top:477.3px;font-size:14.3px;color:#8b8e8f;font-family:'Liberation Sans', sans-serif;">Selected Offset start:</div>
<div class="r" style="left:1047px;top:468px;width:107px;height:34px;box-sizing:border-box;border:1px solid #d3cfca;border-radius:5px;background:#fff;"></div>
<div class="t" style="left:1055.5px;top:477.3px;font-size:14.3px;color:#2e3436;font-family:'Liberation Sans', sans-serif;">0xCA4B05</div>
<div class="t" style="left:1169.0px;top:477.3px;font-size:14.3px;color:#8b8e8f;font-family:'Liberation Sans', sans-serif;">stop:</div>
<div class="r" style="left:1216px;top:468px;width:108px;height:34px;box-sizing:border-box;border:1px solid #d3cfca;border-radius:5px;background:#fff;"></div>
<div class="t" style="left:1225.0px;top:477.3px;font-size:14.3px;color:#2e3436;font-family:'Liberation Sans', sans-serif;">0xBEBC72</div>
<svg class="r" style="left:1339px;top:477px" width="16" height="16" viewBox="0 0 16 16"><rect x="0" y="0" width="16" height="16" rx="3" fill="#3584e4"/><path d="M3.5 8.2 L6.6 11.2 L12.5 4.8" stroke="#fff" stroke-width="2.6" fill="none" stroke-linecap="square"/></svg>
<div class="r" style="left:1375px;top:469px;width:85px;height:33px;box-sizing:border-box;border:1px solid #cfcac5;border-radius:5px;background:#f6f5f4;"></div>
<div class="t" style="left:1392.0px;top:477.3px;font-size:14.3px;color:#8b8e8f;font-family:'Liberation Sans', sans-serif;">Add mode</div>
<div class="t" style="left:542.0px;top:509.1px;font-size:15px;color:#8b8e8f;font-family:'Liberation Mono', monospace;">Region 53 | 75.98 MB read | 5152x5154 px | method: debugfs</div>
<div class="r" style="left:542px;top:530px;width:671px;height:486px;background:#111;"></div>
<svg class="r" style="left:542px;top:530px" width="671" height="486" viewBox="0 0 671 486" shape-rendering="crispEdges"><rect width="671" height="486" fill="#000"/><g stroke-width="1" fill="none" transform="translate(0,0.5)"><path stroke="#ffffff" d="M58 3h2M132 3h2M506 3h2M569 3h2M591 3h2M36 8h2M164 8h2M271 8h2M282 8h2M324 8h2M665 8h2M111 13h2M303 13h2M452 13h2M15 18h2M271 18h2M378 18h2M527 18h2M644 18h2M100 23h2M111 23h2M442 23h2M68 28h2M79 28h2M196 28h2M367 28h2M665 28h2M47 33h2M68 33h2M196 33h2M346 33h2M484 33h2M559 33h2M47 38h2M68 38h2M122 38h2M463 38h2M516 38h2M527 38h2M47 43h2M154 43h2M282 43h2M292 43h2M303 43h2M569 43h2M58 48h2M196 48h2M239 48h2M260 48h2M271 48h2M655 48h2M15 53h2M68 53h2M282 53h2M303 53h2M527 53h2M548 53h2M612 53h2M26 58h2M132 58h2M356 58h2M538 58h2M569 58h2M250 63h2M282 63h2M314 63h2M569 63h2M218 68h2M399 68h2M484 68h2M15 73h2M68 73h2M90 73h2M122 73h2M292 73h2M335 73h2M356 73h2M410 73h2M90 78h2M186 78h2M196 78h2M303 78h2M346 78h2M388 78h2M655 78h2M15 83h2M36 83h2M292 83h2M420 83h2M569 83h2M196 88h2M335 88h2M367 88h2M538 88h2M601 88h2M644 88h2M47 93h2M538 93h2M15 98h2M218 98h2M250 98h2M303 98h2M420 98h2M463 98h2M495 98h2M559 98h2M601 98h2M36 103h2M303 103h2M356 103h2M399 103h2M463 103h2M644 103h2M367 108h2M452 108h2M506 108h2M538 108h2M665 108h2M100 113h2M207 113h2M271 113h2M282 113h2M335 113h2M388 113h2M420 113h2M452 113h2M569 113h2M271 118h2M303 118h2M410 118h2M463 118h2M143 123h2M335 123h2M196 128h2M388 128h2M26 133h2M47 133h2M207 133h2M303 133h2M5 138h2M58 138h2M186 138h2M250 138h2M356 138h2M538 138h2M623 138h2M665 138h2M100 143h2M314 143h2M410 143h2M431 143h2M15 148h2M47 148h2M68 148h2M196 148h2M367 148h2M474 148h2M559 148h2M569 148h2M612 148h2M655 148h2M111 153h2M228 153h2M378 153h2M516 153h2M548 153h2M79 158h2M122 158h2M132 158h2M207 158h2M271 158h2M324 158h2M410 158h2M463 158h2M516 158h2M601 158h2M36 163h2M122 163h2M143 163h2M601 163h2M655 163h2M346 168h2M228 173h2M292 173h2M314 173h2M452 173h2M143 178h2M399 178h2M484 178h2M506 178h2M5 183h2M100 183h2M122 183h2M196 183h2M282 183h2M559 183h2M580 183h2M612 183h2M36 188h2M324 188h2M5 193h2M186 193h2M314 193h2M335 193h2M442 193h2M623 193h2M218 198h2M442 198h2M292 203h2M431 203h2M495 203h2M559 203h2M569 203h2M477 167h6M9 203h8M286 85h8M584 141h5M352 74h4M41 159h8M301 96h3M263 34h6M238 180h8M39 130h5M423 64h5M25 44h8M482 99h2M26 81h8M528 185h3M46 82h8M218 32h6M262 1h4M165 144h6M141 102h4M385 50h5M549 45h4M139 165h4M106 199h4M121 189h4M620 138h5M48 17h4M303 128h4M74 129h8M52 23h4M331 106h6M363 157h3M316 105h2M488 28h4M617 100h3M428 185h5M427 104h6M221 200h2M308 180h3M226 26h4M177 166h4M221 1h8M212 52h8M59 180h4M241 7h3M350 193h3M373 168h6M566 128h6M652 199h3M77 199h2M266 203h3M307 203h3M331 205h3M241 205h2M565 207h2M330 207h3M660 207h2"/><path stroke="#ffff55" d="M260 3h2M612 3h2M655 3h2M346 8h2M442 8h2M15 13h2M100 13h2M196 13h2M346 13h2M591 13h2M623 13h2M5 18h2M314 18h2M399 18h2M538 18h2M559 18h2M665 18h2M36 23h2M196 23h2M207 23h2M250 23h2M335 23h2M399 23h2M452 23h2M474 23h2M527 23h2M5 28h2M218 28h2M239 28h2M495 28h2M633 28h2M644 28h2M655 28h2M58 33h2M79 33h2M186 33h2M207 33h2M282 33h2M538 33h2M601 33h2M196 38h2M474 38h2M260 43h2M431 43h2M463 43h2M506 43h2M601 43h2M26 48h2M36 48h2M100 48h2M132 48h2M143 48h2M282 48h2M100 53h2M132 53h2M186 53h2M623 53h2M506 58h2M623 58h2M68 63h2M122 63h2M132 63h2M175 63h2M367 63h2M474 63h2M484 63h2M591 63h2M36 68h2M68 68h2M122 68h2M239 68h2M356 68h2M633 68h2M154 73h2M186 73h2M633 73h2M164 78h2M228 78h2M324 78h2M442 78h2M591 78h2M100 83h2M239 83h2M250 83h2M260 83h2M346 83h2M388 83h2M463 83h2M474 83h2M506 83h2M5 88h2M58 88h2M122 88h2M154 88h2M207 88h2M431 88h2M474 88h2M271 93h2M292 93h2M303 93h2M356 93h2M378 93h2M420 93h2M474 93h2M527 93h2M601 93h2M655 93h2M122 98h2M506 98h2M538 98h2M623 98h2M633 98h2M665 98h2M196 103h2M228 103h2M292 103h2M367 103h2M559 103h2M68 108h2M100 108h2M111 108h2M122 108h2M335 108h2M516 108h2M591 108h2M111 113h2M324 113h2M463 113h2M548 113h2M655 113h2M15 118h2M36 118h2M399 118h2M623 118h2M633 118h2M644 118h2M655 118h2M175 123h2M420 123h2M442 123h2M36 128h2M154 128h2M218 128h2M250 128h2M559 128h2M569 128h2M633 128h2M655 128h2M665 128h2M58 133h2M68 133h2M90 133h2M228 133h2M260 133h2M484 133h2M516 133h2M612 133h2M100 138h2M271 138h2M506 138h2M527 138h2M36 143h2M186 143h2M324 143h2M506 143h2M655 143h2M90 148h2M154 148h2M218 148h2M228 148h2M250 148h2M292 148h2M378 148h2M442 148h2M132 153h2M346 153h2M410 153h2M452 153h2M506 153h2M665 153h2M143 158h2M196 158h2M346 158h2M356 158h2M665 158h2M15 163h2M100 163h2M292 163h2M335 163h2M431 163h2M495 163h2M164 168h2M260 168h2M420 168h2M569 168h2M612 168h2M143 173h2M154 173h2M335 173h2M474 173h2M484 173h2M559 173h2M218 178h2M346 178h2M495 178h2M644 178h2M79 183h2M218 183h2M420 183h2M5 188h2M516 188h2M90 193h2M463 193h2M591 193h2M186 198h2M239 198h2M506 198h2M580 198h2M58 203h2M228 203h2M239 203h2M250 203h2M271 203h2M324 203h2M356 203h2M410 203h2M316 35h5M554 74h2M496 173h2M467 61h2M402 116h3M324 168h4M363 7h6M72 161h3M307 135h4M663 189h2M180 126h3M446 105h3M635 52h2M484 146h4M296 156h4M103 62h5M382 108h5M455 205h4M309 147h3M497 162h2M282 44h4M24 131h4M535 6h6M659 114h5M287 27h2M118 24h8M376 128h6M484 33h8M310 176h4M379 181h5M97 192h3M200 137h4M558 71h2M646 152h4M637 153h8M290 204h3M540 123h6M154 208h2M327 203h2M663 205h3M371 207h3"/><path stroke="#ff5555" d="M111 3h2M356 3h2M516 3h2M527 3h2M26 8h2M90 8h2M111 8h2M143 8h2M239 8h2M506 8h2M58 13h2M271 13h2M474 13h2M559 13h2M132 18h2M250 18h2M292 18h2M452 18h2M463 18h2M633 18h2M314 23h2M420 23h2M538 23h2M633 23h2M207 28h2M335 28h2M388 28h2M410 28h2M303 33h2M335 33h2M420 33h2M495 33h2M26 38h2M79 38h2M282 38h2M5 43h2M58 43h2M164 43h2M271 43h2M314 43h2M378 43h2M452 43h2M186 48h2M207 48h2M228 48h2M346 48h2M399 48h2M442 48h2M474 48h2M538 48h2M580 48h2M665 48h2M484 53h2M36 58h2M154 58h2M324 58h2M388 58h2M410 58h2M580 58h2M601 58h2M655 58h2M47 63h2M196 63h2M356 63h2M506 63h2M527 63h2M559 63h2M15 68h2M111 68h2M164 68h2M207 68h2M452 68h2M580 68h2M612 68h2M5 73h2M47 73h2M111 73h2M250 73h2M367 73h2M68 78h2M100 78h2M239 78h2M250 78h2M260 78h2M367 78h2M420 78h2M527 78h2M538 78h2M122 83h2M378 83h2M548 83h2M559 83h2M591 83h2M655 83h2M580 88h2M665 88h2M122 93h2M228 93h2M580 93h2M196 98h2M260 98h2M314 98h2M346 98h2M399 98h2M90 103h2M154 103h2M324 103h2M346 103h2M47 108h2M79 108h2M186 113h2M239 113h2M356 113h2M527 113h2M623 113h2M196 118h2M324 118h2M5 123h2M47 123h2M58 123h2M324 123h2M356 123h2M367 123h2M484 123h2M538 123h2M548 123h2M612 123h2M47 128h2M58 128h2M68 128h2M79 128h2M90 128h2M442 128h2M186 133h2M399 133h2M538 133h2M36 138h2M442 138h2M601 138h2M612 138h2M15 143h2M79 143h2M132 143h2M207 143h2M239 143h2M452 143h2M474 143h2M58 148h2M463 148h2M484 148h2M527 148h2M26 153h2M90 153h2M143 153h2M260 153h2M399 153h2M538 153h2M218 158h2M431 158h2M569 158h2M47 163h2M68 163h2M132 163h2M186 163h2M346 163h2M410 163h2M474 163h2M175 168h2M271 168h2M324 168h2M100 173h2M186 173h2M239 173h2M271 173h2M538 173h2M569 173h2M601 173h2M5 178h2M58 178h2M292 178h2M559 178h2M26 183h2M250 183h2M314 183h2M47 188h2M239 188h2M282 188h2M431 188h2M111 193h2M250 193h2M420 193h2M474 193h2M559 193h2M100 198h2M250 198h2M292 198h2M527 198h2M100 203h2M207 203h2M218 203h2M335 203h2M611 111h4M448 129h2M203 80h4M560 59h6M252 115h2M239 190h3M383 69h5M490 193h2M621 60h3M573 75h2M97 138h6M615 203h8M513 197h8M619 9h8M29 161h5M171 32h2M580 76h2M73 149h5M67 190h2M587 126h4M27 160h2M171 53h6M186 7h4M192 7h4M570 80h6M334 6h3M446 127h8M85 208h2M639 19h3M508 45h3M380 157h2M142 3h5M398 82h6M579 61h4M471 24h6M51 121h8M367 116h3M363 199h3M131 201h2M576 203h2M485 203h3"/><path stroke="#55ff55" d="M5 3h2M47 3h2M79 3h2M143 3h2M207 3h2M228 3h2M292 3h2M378 3h2M410 3h2M484 3h2M495 3h2M580 3h2M633 3h2M79 8h2M122 8h2M207 8h2M314 8h2M367 8h2M388 8h2M399 8h2M527 8h2M538 8h2M591 8h2M601 8h2M612 8h2M186 13h2M335 13h2M442 13h2M506 13h2M548 13h2M612 13h2M655 13h2M26 18h2M68 18h2M90 18h2M100 18h2M111 18h2M122 18h2M207 18h2M260 18h2M282 18h2M335 18h2M420 18h2M484 18h2M495 18h2M506 18h2M516 18h2M612 18h2M623 18h2M26 23h2M79 23h2M175 23h2M271 23h2M292 23h2M356 23h2M463 23h2M548 23h2M559 23h2M580 23h2M612 23h2M15 28h2M26 28h2M36 28h2M47 28h2M122 28h2M282 28h2M324 28h2M420 28h2M463 28h2M591 28h2M601 28h2M15 33h2M111 33h2M218 33h2M271 33h2M431 33h2M442 33h2M452 33h2M463 33h2M516 33h2M569 33h2M665 33h2M111 38h2M186 38h2M260 38h2M303 38h2M367 38h2M484 38h2M559 38h2M580 38h2M601 38h2M623 38h2M655 38h2M36 43h2M68 43h2M111 43h2M218 43h2M239 43h2M335 43h2M356 43h2M367 43h2M495 43h2M527 43h2M580 43h2M612 43h2M47 48h2M68 48h2M79 48h2M111 48h2M164 48h2M250 48h2M410 48h2M431 48h2M559 48h2M644 48h2M5 53h2M26 53h2M207 53h2M367 53h2M431 53h2M442 53h2M452 53h2M538 53h2M655 53h2M5 58h2M186 58h2M207 58h2M250 58h2M282 58h2M431 58h2M463 58h2M484 58h2M633 58h2M90 63h2M207 63h2M292 63h2M452 63h2M633 63h2M665 63h2M154 68h2M175 68h2M292 68h2M314 68h2M324 68h2M335 68h2M367 68h2M463 68h2M132 73h2M228 73h2M303 73h2M484 73h2M580 73h2M612 73h2M644 73h2M15 78h2M218 78h2M271 78h2M314 78h2M474 78h2M111 83h2M154 83h2M218 83h2M538 83h2M580 83h2M601 83h2M90 88h2M100 88h2M218 88h2M282 88h2M346 88h2M484 88h2M495 88h2M516 88h2M527 88h2M548 88h2M623 88h2M5 93h2M26 93h2M79 93h2M143 93h2M164 93h2M207 93h2M239 93h2M250 93h2M260 93h2M324 93h2M346 93h2M431 93h2M495 93h2M591 93h2M665 93h2M5 98h2M36 98h2M47 98h2M79 98h2M90 98h2M100 98h2M132 98h2M271 98h2M516 98h2M5 103h2M47 103h2M100 103h2M122 103h2M175 103h2M250 103h2M260 103h2M282 103h2M314 103h2M335 103h2M410 103h2M431 103h2M580 103h2M655 103h2M15 108h2M26 108h2M250 108h2M282 108h2M292 108h2M314 108h2M346 108h2M410 108h2M442 108h2M623 108h2M655 108h2M15 113h2M36 113h2M47 113h2M122 113h2M260 113h2M303 113h2M399 113h2M442 113h2M474 113h2M495 113h2M506 113h2M644 113h2M665 113h2M218 118h2M431 118h2M442 118h2M484 118h2M569 118h2M665 118h2M79 123h2M100 123h2M207 123h2M250 123h2M580 123h2M601 123h2M623 123h2M655 123h2M26 128h2M186 128h2M314 128h2M335 128h2M420 128h2M431 128h2M484 128h2M196 133h2M314 133h2M324 133h2M335 133h2M346 133h2M388 133h2M420 133h2M623 133h2M655 133h2M665 133h2M26 138h2M47 138h2M175 138h2M314 138h2M399 138h2M420 138h2M484 138h2M655 138h2M90 143h2M143 143h2M303 143h2M346 143h2M538 143h2M580 143h2M591 143h2M111 148h2M143 148h2M186 148h2M346 148h2M399 148h2M452 148h2M580 148h2M665 148h2M100 153h2M175 153h2M186 153h2M196 153h2M218 153h2M292 153h2M303 153h2M388 153h2M569 153h2M591 153h2M15 158h2M26 158h2M90 158h2M100 158h2M111 158h2M378 158h2M420 158h2M474 158h2M559 158h2M580 158h2M633 158h2M111 163h2M175 163h2M196 163h2M228 163h2M271 163h2M399 163h2M612 163h2M623 163h2M633 163h2M68 168h2M207 168h2M239 168h2M303 168h2M314 168h2M495 168h2M506 168h2M527 168h2M58 173h2M164 173h2M218 173h2M346 173h2M548 173h2M580 173h2M591 173h2M623 173h2M47 178h2M154 178h2M196 178h2M250 178h2M271 178h2M303 178h2M356 178h2M367 178h2M388 178h2M474 178h2M516 178h2M591 178h2M665 178h2M36 183h2M68 183h2M90 183h2M271 183h2M303 183h2M335 183h2M346 183h2M410 183h2M111 188h2M122 188h2M132 188h2M143 188h2M154 188h2M260 188h2M271 188h2M292 188h2M356 188h2M378 188h2M474 188h2M559 188h2M601 188h2M633 188h2M665 188h2M154 193h2M164 193h2M175 193h2M196 193h2M228 193h2M271 193h2M303 193h2M356 193h2M367 193h2M388 193h2M431 193h2M484 193h2M527 193h2M538 193h2M548 193h2M633 193h2M68 198h2M122 198h2M228 198h2M303 198h2M356 198h2M516 198h2M591 198h2M644 198h2M665 198h2M68 203h2M122 203h2M154 203h2M346 203h2M367 203h2M420 203h2M452 203h2M527 203h2M548 203h2M612 203h2M665 203h2M243 135h6M617 162h3M637 147h2M295 17h4M172 158h6M378 122h8M574 145h3M224 119h3M128 160h6M249 191h3M17 99h8M401 174h3M151 41h5M597 43h5M238 82h2M497 162h8M283 107h8M16 95h8M153 193h8M486 186h2M517 111h6M660 27h5M148 138h8M259 116h5M614 121h4M143 142h2M192 80h5M174 166h5M66 162h4M68 40h5M117 65h6M605 76h5M285 92h6M652 7h6M62 138h5M198 95h6M375 188h8M87 86h8M70 161h8M163 119h8M83 91h4M109 102h2M516 3h4M131 80h5M602 61h2M307 202h8M585 72h5M419 208h5M32 127h6M184 60h2M470 127h4M389 176h4M662 150h8M168 202h6M276 132h4M142 94h2M462 98h3M537 21h8M589 20h4M65 149h2M608 162h3M579 107h3M102 14h8M403 158h3M451 72h6M39 135h5M259 15h4M398 82h8M443 40h2M312 116h4M293 110h6M241 173h4M28 165h5M200 20h6M358 179h2M275 96h6M405 189h3M69 137h2M522 199h4M0 195h1M655 203h2M283 203h5M420 202h2M477 135h8M427 30h8M411 164h3M472 5h5M430 196h8M460 171h4M314 118h5M444 199h2M482 199h2M180 199h2M578 199h2M262 201h2M94 201h3M545 201h2M545 203h3M277 203h3M563 205h2M191 205h3M19 207h2"/><path stroke="#55ffff" d="M36 3h2M164 3h2M186 3h2M335 3h2M388 3h2M452 3h2M644 3h2M47 8h2M68 8h2M218 8h2M623 8h2M5 13h2M36 13h2M90 13h2M164 13h2M367 13h2M463 13h2M538 13h2M442 18h2M580 18h2M601 18h2M47 23h2M260 23h2M324 23h2M644 23h2M186 28h2M250 28h2M271 28h2M314 28h2M346 28h2M506 28h2M516 28h2M527 28h2M538 28h2M623 28h2M26 33h2M154 33h2M260 33h2M314 33h2M506 33h2M207 38h2M228 38h2M324 38h2M335 38h2M410 38h2M452 38h2M612 38h2M228 43h2M399 43h2M538 43h2M623 43h2M644 43h2M665 43h2M569 48h2M47 53h2M111 53h2M218 53h2M324 53h2M335 53h2M388 53h2M420 53h2M111 58h2M218 58h2M335 58h2M452 58h2M474 58h2M111 63h2M143 63h2M228 63h2M239 63h2M388 63h2M580 63h2M132 68h2M260 68h2M282 68h2M388 68h2M474 68h2M644 68h2M282 73h2M378 73h2M388 73h2M452 73h2M623 73h2M655 73h2M207 78h2M335 78h2M335 83h2M410 83h2M47 88h2M111 88h2M271 88h2M314 88h2M324 88h2M569 88h2M591 88h2M282 93h2M314 93h2M506 93h2M623 93h2M111 98h2M388 98h2M569 98h2M378 103h2M452 103h2M90 108h2M132 108h2M154 108h2M175 108h2M196 108h2M239 108h2M260 108h2M271 108h2M303 108h2M378 108h2M388 108h2M463 108h2M548 108h2M58 113h2M154 113h2M218 113h2M143 118h2M420 118h2M122 123h2M303 123h2M314 123h2M388 123h2M452 123h2M100 128h2M132 128h2M399 128h2M463 128h2M644 128h2M431 133h2M548 133h2M601 133h2M68 138h2M79 138h2M143 138h2M154 138h2M196 138h2M239 138h2M388 138h2M410 138h2M559 138h2M58 143h2M68 143h2M516 143h2M601 143h2M665 143h2M36 148h2M79 148h2M271 148h2M495 148h2M314 153h2M356 153h2M388 158h2M495 158h2M79 163h2M164 163h2M303 163h2M420 163h2M559 163h2M399 168h2M452 168h2M655 168h2M196 173h2M644 173h2M569 178h2M58 183h2M111 183h2M260 183h2M378 183h2M484 183h2M79 188h2M175 188h2M367 188h2M420 188h2M527 188h2M569 188h2M580 188h2M655 188h2M26 193h2M79 193h2M495 193h2M665 193h2M143 198h2M324 198h2M474 198h2M495 198h2M538 198h2M569 198h2M26 203h2M90 203h2M143 203h2M516 203h2M580 203h2M623 203h2M666 17h4M367 98h5M300 85h4M25 176h5M320 122h4M651 10h2M634 31h8M73 66h5M436 115h2M379 78h6M475 26h5M599 60h6M540 179h6M214 146h2M125 177h4M229 141h5M306 46h2M483 156h4M376 59h6M487 152h3M540 168h2M77 54h6M348 194h6M366 61h2M646 123h5M120 156h2M313 112h3M353 188h2M167 139h4M84 161h5M500 164h8M585 67h2M203 69h6M327 23h2M509 29h5M476 88h2M196 141h2M477 123h5M625 98h2M607 201h2M113 201h3M168 201h3M234 203h2M609 207h3M455 207h2M80 207h3"/><path stroke="#5555ff" d="M68 3h2M196 3h2M218 3h2M303 3h2M548 3h2M601 3h2M132 8h2M260 8h2M378 8h2M47 13h2M132 13h2M239 13h2M250 13h2M420 13h2M633 13h2M164 18h2M388 18h2M506 23h2M665 23h2M132 28h2M143 28h2M154 28h2M164 28h2M175 28h2M399 28h2M442 28h2M474 28h2M569 28h2M36 33h2M175 33h2M239 33h2M250 33h2M399 33h2M90 38h2M239 38h2M250 38h2M271 38h2M495 38h2M548 38h2M665 38h2M15 43h2M250 43h2M516 43h2M548 43h2M90 48h2M495 48h2M239 53h2M260 53h2M314 53h2M346 53h2M474 53h2M506 53h2M58 58h2M164 58h2M292 58h2M100 63h2M218 63h2M260 63h2M378 63h2M495 63h2M548 63h2M623 63h2M26 68h2M79 68h2M228 68h2M271 68h2M601 68h2M623 68h2M26 73h2M58 73h2M100 73h2M239 73h2M314 73h2M399 73h2M420 73h2M506 73h2M516 73h2M122 78h2M154 78h2M175 78h2M612 78h2M68 83h2M90 83h2M132 83h2M282 83h2M399 83h2M452 83h2M612 83h2M15 88h2M26 88h2M68 88h2M79 88h2M388 88h2M559 88h2M100 93h2M111 93h2M186 93h2M196 93h2M442 93h2M484 93h2M143 98h2M335 98h2M356 98h2M484 98h2M644 98h2M655 98h2M26 103h2M58 103h2M143 103h2M442 103h2M601 103h2M164 108h2M207 108h2M218 108h2M399 108h2M5 113h2M68 113h2M196 113h2M601 113h2M100 118h2M239 118h2M282 118h2M474 118h2M516 118h2M548 118h2M612 118h2M154 123h2M228 123h2M569 123h2M15 128h2M175 128h2M282 128h2M356 128h2M378 128h2M410 128h2M452 128h2M538 128h2M623 128h2M239 133h2M271 133h2M292 133h2M410 133h2M442 133h2M474 133h2M346 138h2M378 138h2M218 143h2M292 143h2M378 143h2M463 143h2M527 143h2M569 143h2M132 148h2M303 148h2M335 148h2M356 148h2M388 148h2M410 148h2M516 148h2M239 153h2M442 153h2M463 153h2M484 153h2M154 158h2M335 158h2M399 158h2M442 158h2M623 158h2M239 163h2M260 163h2M314 163h2M378 163h2M463 163h2M548 163h2M644 163h2M122 168h2M143 168h2M431 168h2M538 168h2M591 168h2M633 168h2M655 173h2M68 178h2M122 178h2M228 178h2M282 178h2M548 178h2M655 178h2M292 183h2M399 183h2M569 183h2M410 188h2M612 188h2M100 193h2M207 193h2M282 193h2M378 193h2M410 193h2M644 193h2M47 198h2M111 198h2M154 198h2M196 198h2M260 198h2M271 198h2M601 198h2M655 198h2M303 203h2M378 203h2M447 173h6M277 93h2M68 19h8M102 187h3M449 147h3M492 35h3M313 200h6M469 176h3M620 207h5M159 53h5M305 191h2M177 29h8M218 96h5M438 150h3M438 170h3M54 201h8M525 112h2M589 122h8M611 49h5M167 36h5M508 157h8M365 136h6M632 129h6M16 157h5M302 160h8M234 201h6M211 120h6M447 104h8M454 21h3M213 10h3M333 155h2M663 53h8M670 169h1M406 190h5M533 176h2M78 5h4M407 35h2M290 197h6M248 99h4M219 6h5M317 28h8M534 199h3M566 201h2M97 203h3"/><path stroke="#ff55ff" d="M100 3h2M154 3h2M175 3h2M282 3h2M314 3h2M420 3h2M463 3h2M474 3h2M665 3h2M5 8h2M154 8h2M196 8h2M250 8h2M335 8h2M356 8h2M410 8h2M452 8h2M484 8h2M516 8h2M580 8h2M644 8h2M655 8h2M26 13h2M122 13h2M154 13h2M207 13h2M218 13h2M228 13h2M260 13h2M282 13h2M388 13h2M410 13h2M484 13h2M495 13h2M601 13h2M644 13h2M665 13h2M47 18h2M196 18h2M218 18h2M228 18h2M239 18h2M303 18h2M324 18h2M346 18h2M367 18h2M410 18h2M655 18h2M68 23h2M90 23h2M154 23h2M164 23h2M186 23h2M218 23h2M239 23h2M282 23h2M655 23h2M58 28h2M100 28h2M111 28h2M260 28h2M378 28h2M559 28h2M580 28h2M90 33h2M122 33h2M143 33h2M228 33h2M356 33h2M378 33h2M388 33h2M527 33h2M591 33h2M5 38h2M100 38h2M143 38h2M164 38h2M218 38h2M506 38h2M569 38h2M644 38h2M79 43h2M100 43h2M122 43h2M324 43h2M346 43h2M655 43h2M15 48h2M218 48h2M292 48h2M324 48h2M335 48h2M367 48h2M463 48h2M527 48h2M36 53h2M79 53h2M122 53h2M143 53h2M154 53h2M175 53h2M228 53h2M292 53h2M463 53h2M569 53h2M591 53h2M633 53h2M47 58h2M90 58h2M100 58h2M122 58h2M143 58h2M228 58h2M239 58h2M303 58h2M314 58h2M346 58h2M367 58h2M378 58h2M420 58h2M548 58h2M665 58h2M15 63h2M36 63h2M58 63h2M271 63h2M303 63h2M346 63h2M399 63h2M420 63h2M516 63h2M644 63h2M58 68h2M250 68h2M431 68h2M559 68h2M569 68h2M346 73h2M431 73h2M442 73h2M474 73h2M495 73h2M548 73h2M559 73h2M591 73h2M58 78h2M79 78h2M143 78h2M410 78h2M506 78h2M516 78h2M548 78h2M559 78h2M569 78h2M580 78h2M601 78h2M633 78h2M79 83h2M164 83h2M186 83h2M303 83h2M324 83h2M442 83h2M484 83h2M633 83h2M644 83h2M665 83h2M36 88h2M132 88h2M228 88h2M303 88h2M399 88h2M420 88h2M612 88h2M15 93h2M58 93h2M68 93h2M90 93h2M132 93h2M218 93h2M335 93h2M399 93h2M410 93h2M559 93h2M612 93h2M633 93h2M26 98h2M154 98h2M186 98h2M207 98h2M239 98h2M282 98h2M292 98h2M324 98h2M452 98h2M527 98h2M186 103h2M271 103h2M420 103h2M527 103h2M591 103h2M633 103h2M228 108h2M420 108h2M431 108h2M474 108h2M132 113h2M143 113h2M164 113h2M292 113h2M314 113h2M367 113h2M378 113h2M484 113h2M516 113h2M538 113h2M559 113h2M591 113h2M5 118h2M58 118h2M132 118h2M154 118h2M175 118h2M378 118h2M388 118h2M452 118h2M495 118h2M559 118h2M591 118h2M111 123h2M132 123h2M186 123h2M196 123h2M260 123h2M271 123h2M346 123h2M506 123h2M527 123h2M559 123h2M591 123h2M5 128h2M122 128h2M239 128h2M260 128h2M271 128h2M324 128h2M367 128h2M474 128h2M495 128h2M516 128h2M527 128h2M612 128h2M100 133h2M111 133h2M154 133h2M164 133h2M175 133h2M218 133h2M250 133h2M282 133h2M378 133h2M452 133h2M463 133h2M633 133h2M132 138h2M218 138h2M324 138h2M367 138h2M463 138h2M474 138h2M495 138h2M548 138h2M569 138h2M591 138h2M5 143h2M26 143h2M47 143h2M154 143h2M164 143h2M282 143h2M420 143h2M484 143h2M495 143h2M548 143h2M559 143h2M623 143h2M5 148h2M175 148h2M314 148h2M324 148h2M420 148h2M548 148h2M623 148h2M633 148h2M644 148h2M5 153h2M58 153h2M79 153h2M335 153h2M495 153h2M580 153h2M601 153h2M655 153h2M5 158h2M36 158h2M47 158h2M58 158h2M68 158h2M186 158h2M260 158h2M452 158h2M484 158h2M527 158h2M538 158h2M655 158h2M58 163h2M154 163h2M218 163h2M367 163h2M442 163h2M452 163h2M506 163h2M516 163h2M538 163h2M569 163h2M580 163h2M591 163h2M665 163h2M36 168h2M90 168h2M100 168h2M132 168h2M218 168h2M250 168h2M292 168h2M335 168h2M356 168h2M410 168h2M442 168h2M559 168h2M5 173h2M111 173h2M122 173h2M207 173h2M303 173h2M356 173h2M378 173h2M388 173h2M442 173h2M495 173h2M506 173h2M633 173h2M665 173h2M26 178h2M207 178h2M239 178h2M410 178h2M431 178h2M442 178h2M452 178h2M623 178h2M633 178h2M132 183h2M164 183h2M207 183h2M356 183h2M431 183h2M442 183h2M495 183h2M516 183h2M527 183h2M538 183h2M548 183h2M591 183h2M601 183h2M623 183h2M644 183h2M15 188h2M207 188h2M314 188h2M452 188h2M463 188h2M506 188h2M36 193h2M143 193h2M218 193h2M260 193h2M324 193h2M346 193h2M516 193h2M569 193h2M601 193h2M655 193h2M15 198h2M164 198h2M175 198h2M207 198h2M282 198h2M367 198h2M431 198h2M452 198h2M463 198h2M484 198h2M548 198h2M559 198h2M633 198h2M15 203h2M79 203h2M164 203h2M186 203h2M196 203h2M282 203h2M399 203h2M474 203h2M506 203h2M591 203h2M601 203h2M166 61h4M588 207h5M377 193h3M251 68h6M201 109h2M627 102h4M486 2h8M373 79h4M96 122h3M535 113h2M391 86h5M51 93h8M300 98h6M658 24h4M203 167h5M228 109h6M395 97h5M456 157h2M510 46h3M654 30h6M77 187h8M654 147h6M469 128h2M497 112h4M14 118h4M533 194h6M373 87h4M72 115h4M652 14h4M64 129h3M285 102h8M370 143h2M351 160h2M43 179h5M410 56h2M616 46h3M76 124h4M505 115h6M7 122h2M469 187h3M21 74h4M370 30h8M0 189h8M666 152h5M435 177h4M63 206h3M493 37h6M183 139h5M130 173h3M354 3h8M223 68h6M530 135h2M175 173h3M26 34h3M68 45h2M526 161h3M617 3h2M542 80h5M528 22h8M318 89h8M400 201h8M330 182h6M407 185h2M239 24h2M333 176h6M380 143h6M93 26h2M254 161h8M368 42h3M661 153h2M326 58h2M7 10h6M457 29h2M563 187h4M600 184h8M576 108h5M84 110h2M210 122h5M428 140h2M622 81h6M9 14h4M560 16h5M339 207h2M58 41h3M438 49h3M194 69h5M167 199h3M445 199h2M281 201h2M446 201h3M449 203h3M661 205h2M400 205h3M20 205h3M447 205h2M118 205h3M368 207h2M112 207h2"/><path stroke="#ff66ff" stroke-dasharray="1 3" stroke-dashoffset="0" d="M577 129h160M8 55h40M482 147h40M149 90h90M447 107h15M441 128h160M324 125h90M634 82h90M399 107h90M29 60h25M576 129h25M528 121h120M339 192h90M181 118h120M-15 100h40M539 3h90M484 119h40M643 143h90M431 121h15M623 97h90M331 88h15M6 110h160M605 159h90M57 81h60M547 86h25M407 133h40M162 199h160M550 176h120M496 67h90M292 164h40M51 125h120M77 201h90M407 133h120M238 98h25M361 74h120M158 12h60M647 104h15M23 138h120M515 19h25M429 138h40M529 137h40M161 140h90M367 124h120M461 150h40M63 122h15M220 70h160M459 122h90M629 92h90M114 119h160M572 175h15M288 65h15M47 185h15M429 89h120M479 90h60M245 105h25M370 95h25M31 120h25M570 92h90M443 39h15M100 57h60M402 80h25M579 56h40M49 76h60M585 129h120M96 126h60M363 10h90M369 118h15M12 85h60M134 198h60M508 35h120M-7 117h25M19 64h40M497 130h60M424 111h120M318 95h25M414 101h40M247 128h40M630 60h90M447 12h90M299 77h40M39 7h25M50 97h40M146 159h15M525 61h40M568 122h120" stroke-opacity="0.85"/><path stroke="#66ff66" stroke-dasharray="1 3" stroke-dashoffset="1" d="M577 129h160M8 55h40M482 147h40M149 90h90M447 107h15M441 128h160M324 125h90M634 82h90M399 107h90M29 60h25M576 129h25M528 121h120M339 192h90M181 118h120M-15 100h40M539 3h90M484 119h40M643 143h90M431 121h15M623 97h90M331 88h15M6 110h160M605 159h90M57 81h60M547 86h25M407 133h40M162 199h160M550 176h120M496 67h90M292 164h40M51 125h120M77 201h90M407 133h120M238 98h25M361 74h120M158 12h60M647 104h15M23 138h120M515 19h25M429 138h40M529 137h40M161 140h90M367 124h120M461 150h40M63 122h15M220 70h160M459 122h90M629 92h90M114 119h160M572 175h15M288 65h15M47 185h15M429 89h120M479 90h60M245 105h25M370 95h25M31 120h25M570 92h90M443 39h15M100 57h60M402 80h25M579 56h40M49 76h60M585 129h120M96 126h60M363 10h90M369 118h15M12 85h60M134 198h60M508 35h120M-7 117h25M19 64h40M497 130h60M424 111h120M318 95h25M414 101h40M247 128h40M630 60h90M447 12h90M299 77h40M39 7h25M50 97h40M146 159h15M525 61h40M568 122h120" stroke-opacity="0.85"/><path stroke="#ffffff" stroke-dasharray="1 3" stroke-dashoffset="2" d="M577 129h160M8 55h40M482 147h40M149 90h90M447 107h15M441 128h160M324 125h90M634 82h90M399 107h90M29 60h25M576 129h25M528 121h120M339 192h90M181 118h120M-15 100h40M539 3h90M484 119h40M643 143h90M431 121h15M623 97h90M331 88h15M6 110h160M605 159h90M57 81h60M547 86h25M407 133h40M162 199h160M550 176h120M496 67h90M292 164h40M51 125h120M77 201h90M407 133h120M238 98h25M361 74h120M158 12h60M647 104h15M23 138h120M515 19h25M429 138h40M529 137h40M161 140h90M367 124h120M461 150h40M63 122h15M220 70h160M459 122h90M629 92h90M114 119h160M572 175h15M288 65h15M47 185h15M429 89h120M479 90h60M245 105h25M370 95h25M31 120h25M570 92h90M443 39h15M100 57h60M402 80h25M579 56h40M49 76h60M585 129h120M96 126h60M363 10h90M369 118h15M12 85h60M134 198h60M508 35h120M-7 117h25M19 64h40M497 130h60M424 111h120M318 95h25M414 101h40M247 128h40M630 60h90M447 12h90M299 77h40M39 7h25M50 97h40M146 159h15M525 61h40M568 122h120" stroke-opacity="0.85"/><path stroke="#66ffff" stroke-dasharray="1 3" stroke-dashoffset="3" d="M577 129h160M8 55h40M482 147h40M149 90h90M447 107h15M441 128h160M324 125h90M634 82h90M399 107h90M29 60h25M576 129h25M528 121h120M339 192h90M181 118h120M-15 100h40M539 3h90M484 119h40M643 143h90M431 121h15M623 97h90M331 88h15M6 110h160M605 159h90M57 81h60M547 86h25M407 133h40M162 199h160M550 176h120M496 67h90M292 164h40M51 125h120M77 201h90M407 133h120M238 98h25M361 74h120M158 12h60M647 104h15M23 138h120M515 19h25M429 138h40M529 137h40M161 140h90M367 124h120M461 150h40M63 122h15M220 70h160M459 122h90M629 92h90M114 119h160M572 175h15M288 65h15M47 185h15M429 89h120M479 90h60M245 105h25M370 95h25M31 120h25M570 92h90M443 39h15M100 57h60M402 80h25M579 56h40M49 76h60M585 129h120M96 126h60M363 10h90M369 118h15M12 85h60M134 198h60M508 35h120M-7 117h25M19 64h40M497 130h60M424 111h120M318 95h25M414 101h40M247 128h40M630 60h90M447 12h90M299 77h40M39 7h25M50 97h40M146 159h15M525 61h40M568 122h120" stroke-opacity="0.85"/><path stroke="#ff66ff" stroke-dasharray="1 3" stroke-dashoffset="0" d="M100 99h571M0 99h60"/><path stroke="#66ff66" stroke-dasharray="1 3" stroke-dashoffset="1" d="M100 99h571M0 99h60"/><path stroke="#ffffff" stroke-dasharray="1 3" stroke-dashoffset="2" d="M100 99h571M0 99h60"/><path stroke="#66ffff" stroke-dasharray="1 3" stroke-dashoffset="3" d="M100 99h571M0 99h60"/><path stroke="#ff66ff" stroke-dasharray="2 6" stroke-dashoffset="0" stroke-opacity="0.6" d="M0 100h671"/><path stroke="#66ff66" stroke-dasharray="2 6" stroke-dashoffset="2" stroke-opacity="0.6" d="M0 100h671"/><path stroke="#ffffff" stroke-dasharray="2 6" stroke-dashoffset="4" stroke-opacity="0.6" d="M0 100h671"/><path stroke="#66ffff" stroke-dasharray="2 6" stroke-dashoffset="6" stroke-opacity="0.6" d="M0 100h671"/><path stroke="#1e1e1e" d="M485 263h20M15 280h30M281 293h8M663 274h5M618 243h30M66 211h5M616 213h5M518 281h30M258 313h20M611 334h30M346 328h20M102 286h8M160 227h20M4 318h20M290 320h3M494 296h5M441 275h20M444 295h20M576 221h30M498 302h12M276 213h12M78 276h8M27 302h30M97 307h20M324 285h8M295 283h30M311 217h12M239 219h3M240 256h8M525 301h20M281 239h20M664 292h5M262 227h20M580 230h5M491 227h20M100 313h12M530 317h30M268 227h3M8 305h30M109 255h8M110 247h12M577 246h5M30 319h20M193 263h8M13 333h12M583 211h3M2 233h20M202 276h30M134 239h20M251 238h30M385 240h8M156 313h20M517 298h5M324 302h12M457 254h20M456 218h20M170 240h3M570 296h20M258 224h5M320 242h30M480 251h20M473 330h5M155 260h5M591 306h30M566 311h20M670 286h20M298 319h12M272 306h3M616 218h5M17 314h12M56 306h30M463 219h3M366 223h8M156 271h20M364 302h30M133 213h30M102 339h8M390 326h8M421 280h30M207 273h12M462 276h8M358 337h12M668 266h12M506 251h3M485 287h12M133 220h12M519 313h30M513 262h3M495 291h8M11 239h20M600 313h5M104 327h30M331 212h20M371 298h20M159 282h12M118 216h30M454 247h5M148 254h5M535 214h12M513 266h3M483 239h30M251 328h20M63 277h3M459 301h8M192 305h3M373 254h12M414 267h8M18 303h30M119 269h12M365 251h20M665 218h8M267 239h5M447 336h3M288 221h30M21 288h8M169 224h5M382 263h20M211 291h20M218 210h20M320 243h30M473 283h3M439 250h20M371 273h5M651 249h30M520 281h20M537 294h30M480 238h20M454 308h20M528 290h20M563 339h8M194 255h20M118 312h30M84 229h8M304 291h8M88 310h3M274 305h8M342 314h3M135 247h3M238 304h12M646 324h8M496 295h3M232 254h5M550 251h3M376 210h20M462 228h3M40 250h5M433 221h20M181 307h12M133 285h5M218 303h8M224 338h3M68 218h3M131 245h3M311 254h8M192 247h12M261 301h12M158 227h5M603 337h3M580 333h12M522 286h30M514 274h12M635 259h12M198 259h5M355 259h3M552 320h3M137 288h5M647 278h30M75 257h8M390 294h8M492 300h30M207 262h30M170 302h5M486 271h5M116 314h12M369 253h5M496 323h20M620 217h8M108 317h12M25 248h5M146 218h8M606 283h8M395 279h20M157 242h30M286 311h8M100 253h8M414 226h12M19 259h8M106 300h30M31 264h5M538 210h20M193 219h20M109 242h3M443 216h30M61 214h3M538 307h8M204 278h3M14 230h20M303 292h5M511 262h5M415 220h3"/><path stroke="#6a6a6a" d="M236 209h8M236 217h8M236 225h8M236 241h8M236 249h8M236 257h8M236 265h8M236 273h8M236 281h8M236 289h8M236 297h8M236 305h8M236 321h8M236 329h8M236 337h8M478 209h8M478 217h8M478 225h8M478 249h8M478 257h8M478 265h8M478 273h8M478 289h8M478 297h8M478 305h8M478 313h8M478 321h8M478 329h8M478 337h8"/></g></svg>
<div class="r" style="left:542px;top:870px;width:671px;height:7px;background:#0c5c5c;"></div>
<div class="r" style="left:542px;top:877px;width:671px;height:8px;background:repeating-linear-gradient(90deg,#50f0f0 0 1px,#c0ffd0 1px 2px,#40c8d0 2px 3px,#1a7878 3px 4px);filter:brightness(0.85);"></div>
<div class="r" style="left:542px;top:885px;width:671px;height:1px;background:repeating-linear-gradient(90deg,#50f0f0 0 1px,#c0ffd0 1px 2px,#40c8d0 2px 3px,#1a7878 3px 4px);filter:brightness(0.5);"></div>
<div class="r" style="left:542px;top:886px;width:671px;height:7px;background:repeating-linear-gradient(90deg,#50f0f0 0 1px,#c0ffd0 1px 2px,#40c8d0 2px 3px,#1a7878 3px 4px);filter:brightness(0.8);"></div>
<div class="r" style="left:542px;top:893px;width:671px;height:1px;background:repeating-linear-gradient(90deg,#50f0f0 0 1px,#c0ffd0 1px 2px,#40c8d0 2px 3px,#1a7878 3px 4px);filter:brightness(0.45);"></div>
<div class="r" style="left:542px;top:894px;width:671px;height:19px;background:repeating-linear-gradient(90deg,#50f0f0 0 1px,#c0ffd0 1px 2px,#40c8d0 2px 3px,#1a7878 3px 4px);filter:brightness(0.78);"></div>
<div class="r" style="left:542px;top:913px;width:671px;height:7px;background:#165858;"></div>
<div class="r" style="left:542px;top:920px;width:671px;height:14px;background:repeating-linear-gradient(90deg,#ff60ff 0 1px,#ffff70 1px 2px,#60ffff 2px 3px,#303030 3px 4px);filter:brightness(0.32);"></div>
<div class="r" style="left:542px;top:944px;width:671px;height:10px;background:repeating-linear-gradient(90deg,#ff60ff 0 1px,#ffff70 1px 2px,#60ffff 2px 3px,#303030 3px 4px);filter:brightness(0.85);"></div>
<div class="r" style="left:542px;top:954px;width:671px;height:6px;background:repeating-linear-gradient(90deg,#ff60ff 0 1px,#ffff70 1px 2px,#60ffff 2px 3px,#303030 3px 4px);filter:brightness(0.4);"></div>
<div class="r" style="left:542px;top:960px;width:671px;height:6px;background:repeating-linear-gradient(90deg,#ff60ff 0 1px,#ffff70 1px 2px,#60ffff 2px 3px,#303030 3px 4px);filter:brightness(0.85);"></div>
<div class="r" style="left:542px;top:966px;width:671px;height:13px;background:repeating-linear-gradient(90deg,#ff60ff 0 1px,#ffff70 1px 2px,#60ffff 2px 3px,#303030 3px 4px);filter:brightness(0.85);"></div>
<div class="r" style="left:542px;top:979px;width:671px;height:22px;background:repeating-linear-gradient(90deg,#ff60ff 0 1px,#ffff70 1px 2px,#60ffff 2px 3px,#303030 3px 4px);filter:brightness(0.55);"></div>
<div class="r" style="left:542px;top:948px;width:671px;height:1px;background:#202020;"></div>
<div class="r" style="left:542px;top:969px;width:671px;height:1px;background:#202020;"></div>
<div class="r" style="left:542px;top:985px;width:671px;height:1px;background:#202020;"></div>
<div class="r" style="left:542px;top:992px;width:671px;height:1px;background:#202020;"></div>
<div class="r" style="left:542px;top:1010px;width:671px;height:6px;background:repeating-linear-gradient(90deg,#ff60ff 0 1px,#ffff70 1px 2px,#60ffff 2px 3px,#303030 3px 4px);filter:brightness(0.45);"></div>
<svg class="r" style="left:832.7px;top:858.2px" width="22" height="22" viewBox="0 0 22 22"><path d="M4 4L18 18M18 4L4 18" stroke="#e4e2c4" stroke-width="4.6" stroke-linecap="square"/><path d="M4.3 4.3L17.7 17.7M17.7 4.3L4.3 17.7" stroke="#bdb21e" stroke-width="2.2"/></svg>
<svg class="r" style="left:849.8px;top:907.3px" width="22" height="22" viewBox="0 0 22 22"><path d="M4 4L18 18M18 4L4 18" stroke="#e4e2c4" stroke-width="4.6" stroke-linecap="square"/><path d="M4.3 4.3L17.7 17.7M17.7 4.3L4.3 17.7" stroke="#bdb21e" stroke-width="2.2"/></svg>
<svg class="r" style="left:1018px;top:880px" width="14" height="20" viewBox="0 0 14 20"><path d="M1 1 L1 15.5 L4.5 12.3 L7.2 18 L9.6 17 L7 11.4 L11.8 11.2 Z" fill="#f4f4f4" stroke="#111" stroke-width="1.1" stroke-linejoin="round"/></svg>
<div class="r" style="left:917px;top:902px;width:223px;height:84px;background:rgba(0,0,0,0.98);border-radius:4px;"></div>
<div class="t" style="left:931.6px;top:917.4px;font-size:14px;color:#f4f4f4;font-family:'Liberation Sans', sans-serif;font-weight:bold;">Path:</div>
<div class="t" style="left:969.7px;top:917.4px;font-size:14px;color:#f4f4f4;font-family:'Liberation Sans', sans-serif;">Region 53</div>
<div class="t" style="left:931.6px;top:936.6px;font-size:14px;color:#f4f4f4;font-family:'Liberation Sans', sans-serif;font-weight:bold;">Size:</div>
<div class="t" style="left:966.2px;top:936.6px;font-size:14px;color:#f4f4f4;font-family:'Liberation Sans', sans-serif;">18.99 KB</div>
<div class="t" style="left:931.6px;top:955.1px;font-size:14px;color:#f4f4f4;font-family:'Liberation Sans', sans-serif;font-weight:bold;">Range:</div>
<div class="t" style="left:980.7px;top:955.1px;font-size:14px;color:#f4f4f4;font-family:'Liberation Sans', sans-serif;letter-spacing:0.55px;">0x185a06 - 0x18a600</div>
<div class="r" style="left:1213px;top:498px;width:502px;height:526px;background:#000;"></div>
<div class="r" style="left:1214px;top:499px;width:501px;height:21px;background:linear-gradient(#fbfbf9,#e8e5e2 60%,#e2dfdb 96%,#efebe7);"></div>
<div class="r" style="left:1214px;top:520px;width:501px;height:1px;background:#000;"></div>
<div class="r" style="left:1219px;top:506px;width:4px;height:2px;background:#6d6d6d;"></div>
<div class="r" style="left:1219px;top:510px;width:4px;height:2px;background:#6d6d6d;"></div>
<div class="r" style="left:1226px;top:506px;width:4px;height:2px;background:#6d6d6d;"></div>
<div class="r" style="left:1226px;top:510px;width:4px;height:2px;background:#6d6d6d;"></div>
<div class="t" style="left:1343.0px;top:502.9px;font-size:14px;color:#767676;font-family:'Liberation Sans', sans-serif;font-weight:bold;">Thumbnail View</div>
<div class="r" style="left:1214px;top:521px;width:501px;height:503px;background:#0a0a0a;"></div>
<svg class="r" style="left:1214px;top:521px" width="501" height="503" viewBox="0 521 501 503" shape-rendering="crispEdges"><defs><filter id="tnz" x="0" y="521" width="501" height="503" filterUnits="userSpaceOnUse" color-interpolation-filters="sRGB"><feTurbulence type="fractalNoise" baseFrequency="0.3 1.1" numOctaves="2" seed="4"/><feColorMatrix type="matrix" values="0 0 0 0 0  0 0 0 0 0  0 0 0 0 0  -1.1 0 0 0 0.72"/></filter></defs><rect x="0" y="521" width="501" height="503" fill="#000"/><rect x="0" y="521" width="501" height="7.5" fill="rgb(126,126,126)"/><rect x="0" y="528.5" width="501" height="7.5" fill="rgb(24,24,24)"/><rect x="0" y="536" width="501" height="24" fill="rgb(6,6,6)"/><rect x="0" y="560" width="501" height="14" fill="rgb(30,30,30)"/><rect x="0" y="574" width="501" height="2" fill="rgb(84,84,84)"/><rect x="0" y="576" width="501" height="10" fill="rgb(42,42,42)"/><rect x="0" y="586" width="501" height="13" fill="rgb(18,18,18)"/><rect x="0" y="599" width="501" height="5" fill="rgb(156,156,156)"/><rect x="0" y="604" width="501" height="9" fill="rgb(90,90,90)"/><rect x="0" y="613" width="501" height="13" fill="rgb(114,114,114)"/><rect x="0" y="626" width="501" height="11" fill="rgb(15,15,15)"/><rect x="0" y="637" width="501" height="17" fill="rgb(36,36,36)"/><rect x="0" y="654" width="501" height="24.5" fill="rgb(9,9,9)"/><rect x="0" y="678.5" width="501" height="3.5" fill="rgb(126,126,126)"/><rect x="0" y="682" width="501" height="4" fill="rgb(75,75,75)"/><rect x="0" y="686" width="501" height="4" fill="rgb(114,114,114)"/><rect x="0" y="690" width="501" height="5" fill="rgb(66,66,66)"/><rect x="0" y="695" width="501" height="4" fill="rgb(102,102,102)"/><rect x="0" y="699" width="501" height="5" fill="rgb(54,54,54)"/><rect x="0" y="704" width="501" height="26" fill="rgb(18,18,18)"/><rect x="0" y="730" width="501" height="12" fill="rgb(60,60,60)"/><rect x="0" y="742" width="501" height="15" fill="rgb(24,24,24)"/><rect x="0" y="757" width="501" height="27" fill="rgb(120,120,120)"/><rect x="0" y="784" width="501" height="53" fill="rgb(7,7,7)"/><rect x="0" y="837" width="501" height="13" fill="rgb(168,168,168)"/><rect x="0" y="850" width="501" height="6" fill="rgb(90,90,90)"/><rect x="0" y="856" width="501" height="14" fill="rgb(72,72,72)"/><rect x="0" y="870" width="501" height="12" fill="rgb(60,60,60)"/><rect x="0" y="882" width="501" height="7" fill="rgb(30,30,30)"/><rect x="0" y="889" width="501" height="27" fill="rgb(126,126,126)"/><rect x="0" y="521" width="501" height="503" filter="url(#tnz)"/><rect x="346.5" y="566.5" width="92" height="47" fill="rgba(128,0,128,0.72)" stroke="#e030e0" stroke-width="1.6"/></svg>
<div class="r" style="left:1437px;top:325px;width:278px;height:200px;background:#000;"></div>
<div class="r" style="left:1439px;top:331px;width:275px;height:188px;background:#f6f5f4;"></div>
<svg class="r" style="left:1448px;top:332px" width="256" height="182" viewBox="0 0 256 182" shape-rendering="crispEdges"><defs><filter id="dgn" x="0" y="0" width="256" height="182" filterUnits="userSpaceOnUse" color-interpolation-filters="sRGB"><feTurbulence type="fractalNoise" baseFrequency="0.9" numOctaves="1" seed="12"/><feColorMatrix type="matrix" values="0 0 0 0 0  0 0 0 0 1  0 0 0 0 0  14 0 0 0 -7.0"/></filter><filter id="dgm" x="0" y="0" width="256" height="182" filterUnits="userSpaceOnUse" color-interpolation-filters="sRGB"><feTurbulence type="fractalNoise" baseFrequency="0.03" numOctaves="2" seed="8"/><feColorMatrix type="matrix" values="0 0 0 0 0  0 0 0 0 0  0 0 0 0 0  5 0 0 0 -2.2"/></filter></defs><rect width="256" height="182" fill="#000"/><rect width="256" height="182" filter="url(#dgn)"/><g stroke="#00ff00" fill="none" stroke-width="1.3" opacity="0.75"><path d="M60 2 L88 30 L110 52"/><path d="M150 75 L200 130 L250 178"/><path d="M175 80 L220 125"/><path d="M0 56.5h256M0 88.5h256M0 120.5h256M0 152.5h256" stroke-width="1" opacity="0.35"/><path d="M64.5 0v182M128.5 0v182M192.5 0v182" stroke-width="1" opacity="0.35"/></g><rect x="0.5" y="0.5" width="255" height="181" fill="none" stroke="#00ff00" stroke-width="1.4"/></svg>
<div class="r" style="left:1437px;top:0px;width:278px;height:331px;background:#000;"></div>
<div class="r" style="left:1439px;top:0px;width:274px;height:326px;background:#f6f5f4;"></div>
<div class="r" style="left:1439px;top:-1px;width:274px;height:21px;background:linear-gradient(#fbfbf9,#e8e5e2 60%,#e2dfdb 96%,#efebe7);"></div>
<div class="r" style="left:1439px;top:20px;width:274px;height:1px;background:#000;"></div>
<div class="r" style="left:1444px;top:6px;width:4px;height:2px;background:#6d6d6d;"></div>
<div class="r" style="left:1444px;top:10px;width:4px;height:2px;background:#6d6d6d;"></div>
<div class="r" style="left:1451px;top:6px;width:4px;height:2px;background:#6d6d6d;"></div>
<div class="r" style="left:1451px;top:10px;width:4px;height:2px;background:#6d6d6d;"></div>
<div class="t" style="left:1462.4px;top:3.2px;font-size:13.7px;color:#3d3d3d;font-family:'Liberation Sans', sans-serif;font-weight:bold;">Digraph View (as superuser)</div>
<div class="r" style="left:1654px;top:13px;width:13px;height:3px;background:#6d6d6d;"></div>
<div class="r" style="left:1675px;top:3px;width:13px;height:13px;box-sizing:border-box;border:2px solid #6d6d6d;border-top-width:3px;"></div>
<svg class="r" style="left:1696px;top:3px" width="14" height="13" viewBox="0 0 14 13"><path d="M1 1 L13 12 M13 1 L1 12" stroke="#6d6d6d" stroke-width="2.2"/></svg>
<div class="r" style="left:1440px;top:22px;width:97px;height:32px;background:#dcd8d4;border-radius:5px;"></div>
<div class="t" style="left:1456.0px;top:30.4px;font-size:14.3px;color:#2e3436;font-family:'Liberation Sans', sans-serif;">Weighted</div>
<div class="r" style="left:1547px;top:22px;width:36px;height:33px;box-sizing:border-box;border:1px solid #cfcac5;border-radius:5px;background:#f6f5f4;"></div>
<svg class="r" style="left:1557px;top:28px" width="16" height="20" viewBox="0 0 16 20"><rect x="2.5" y="12.5" width="11" height="6" fill="#fafafa" stroke="#3a3a3a" stroke-width="1"/><rect x="5" y="14.5" width="6" height="1" fill="#b8b8b8"/><path d="M8 2.2 L8 11.5" stroke="#4aa214" stroke-width="4" stroke-linecap="round"/><path d="M4 9.5 Q8 14.5 12 9.5" stroke="#4aa214" stroke-width="3.2" fill="none" stroke-linecap="round"/><path d="M7.6 3 L7.6 11" stroke="#9be25a" stroke-width="1.1"/></svg>
<div class="r" style="left:1448px;top:65px;width:256px;height:256px;background:#000;"></div>
<svg class="r" style="left:1448px;top:65px" width="256" height="256" viewBox="0 0 256 256"><defs><filter id="dbl" x="-20" y="-20" width="300" height="300" filterUnits="userSpaceOnUse"><feGaussianBlur stdDeviation="1.3"/></filter><filter id="dbl2" x="-20" y="-20" width="300" height="300" filterUnits="userSpaceOnUse"><feGaussianBlur stdDeviation="4"/></filter><filter id="dbl3" x="-20" y="-20" width="300" height="300" filterUnits="userSpaceOnUse"><feGaussianBlur stdDeviation="0.8"/></filter></defs><rect width="256" height="256" fill="#000"/><path d="M24 20 L73 57 L126 108 L180 151 L234 199 L256 210 L256 256 L234 237 L180 196 L126 145 L73 73 L27 25 Z" fill="#0a420a" filter="url(#dbl2)"/><path d="M66 126 L80 104 L104 100 L125 128 L138 150 L124 164 L92 152 Z" fill="#0b3f0b" filter="url(#dbl2)"/><polygon points="24,20 46,35 73,57 99,84 126,108 153,129 180,151 207,172 234,199 256,210 256,256 234,237 207,218 180,196 153,170 126,145 99,108 73,73 46,49 24,25" fill="#0d520d" filter="url(#dbl)"/><g filter="url(#dbl3)"><path d="M153 152.7 L180 178.9 L207 202.4 L234 223.3 L256 240.3" stroke="#25a825" stroke-opacity="0.12" stroke-width="1.6" fill="none"/><path d="M180 188.5 L207 210.9 L234 232.9 L256 249.6" stroke="#25a825" stroke-opacity="0.14" stroke-width="1.6" fill="none"/><path d="M46 37.7 L73 59.3 L99 86.4" stroke="#25a825" stroke-opacity="0.39" stroke-width="0.8" fill="none"/><path d="M99 90.5 L126 114.9 L153 139.4" stroke="#25a825" stroke-opacity="0.25" stroke-width="1" fill="none"/><path d="M99 87.6 L126 114.2 L153 135.1 L180 157.8 L207 178.6" stroke="#25a825" stroke-opacity="0.18" stroke-width="0.8" fill="none"/><path d="M153 152.7 L180 179.1" stroke="#25a825" stroke-opacity="0.23" stroke-width="1.2" fill="none"/><path d="M207 178.7 L234 207.9 L256 216.6" stroke="#25a825" stroke-opacity="0.32" stroke-width="1.6" fill="none"/><path d="M180 151.3 L207 174.2 L234 199.5 L256 211.7" stroke="#25a825" stroke-opacity="0.28" stroke-width="1" fill="none"/><path d="M99 86.2 L126 111.8 L153 134.0 L180 157.5 L207 175.9" stroke="#25a825" stroke-opacity="0.32" stroke-width="1.2" fill="none"/><path d="M24 26.1 L46 45.4 L73 70.1 L99 105.1 L126 141.5" stroke="#25a825" stroke-opacity="0.19" stroke-width="0.8" fill="none"/><path d="M153 140.5 L180 163.4 L207 185.0 L234 211.6" stroke="#25a825" stroke-opacity="0.40" stroke-width="1" fill="none"/><path d="M46 45.2 L73 68.1 L99 100.2 L126 135.0 L153 159.8 L180 183.2" stroke="#25a825" stroke-opacity="0.21" stroke-width="0.8" fill="none"/><path d="M24 24.2 L46 47.5 L73 74.6 L99 107.8 L126 142.8" stroke="#25a825" stroke-opacity="0.37" stroke-width="1.6" fill="none"/><path d="M180 154.4 L207 178.3 L234 202.2 L256 214.7" stroke="#25a825" stroke-opacity="0.40" stroke-width="1" fill="none"/><path d="M207 217.7 L234 235.4 L256 254.0" stroke="#25a825" stroke-opacity="0.23" stroke-width="1" fill="none"/><path d="M73 60.3 L99 85.4 L126 112.1 L153 133.7 L180 156.3" stroke="#25a825" stroke-opacity="0.24" stroke-width="0.8" fill="none"/><path d="M153 161.9 L180 187.4 L207 207.6 L234 229.7 L256 245.3" stroke="#25a825" stroke-opacity="0.24" stroke-width="1.2" fill="none"/><path d="M153 168.6 L180 192.1 L207 216.2" stroke="#25a825" stroke-opacity="0.16" stroke-width="1.2" fill="none"/><path d="M153 147.1 L180 171.2 L207 195.0 L234 216.2" stroke="#25a825" stroke-opacity="0.38" stroke-width="1" fill="none"/><path d="M207 213.8 L234 232.1 L256 250.1" stroke="#25a825" stroke-opacity="0.13" stroke-width="1.2" fill="none"/><path d="M207 215.9 L234 235.5 L256 254.0" stroke="#25a825" stroke-opacity="0.13" stroke-width="1.6" fill="none"/><path d="M126 118.0 L153 141.8" stroke="#25a825" stroke-opacity="0.28" stroke-width="1" fill="none"/><path d="M73 62.5 L99 91.2" stroke="#25a825" stroke-opacity="0.13" stroke-width="1" fill="none"/><path d="M73 57.5 L99 84.8 L126 112.0 L153 133.1 L180 156.4" stroke="#25a825" stroke-opacity="0.27" stroke-width="1" fill="none"/><path d="M153 157.8 L180 185.1" stroke="#25a825" stroke-opacity="0.35" stroke-width="0.8" fill="none"/><path d="M153 157.4 L180 181.2" stroke="#25a825" stroke-opacity="0.17" stroke-width="1.2" fill="none"/><path d="M126 144.5 L153 167.7 L180 195.1 L207 216.3" stroke="#25a825" stroke-opacity="0.20" stroke-width="1" fill="none"/><path d="M180 158.0 L207 178.0 L234 203.5 L256 215.6" stroke="#25a825" stroke-opacity="0.34" stroke-width="0.8" fill="none"/><path d="M153 146.3 L180 168.3 L207 188.9 L234 215.0 L256 227.8" stroke="#25a825" stroke-opacity="0.22" stroke-width="1" fill="none"/><path d="M207 194.2 L234 219.2 L256 231.3" stroke="#25a825" stroke-opacity="0.27" stroke-width="1.2" fill="none"/><path d="M180 172.6 L207 196.8" stroke="#25a825" stroke-opacity="0.24" stroke-width="1.2" fill="none"/><path d="M24 21.4 L46 38.8" stroke="#25a825" stroke-opacity="0.16" stroke-width="0.8" fill="none"/><path d="M180 186.1 L207 208.2" stroke="#25a825" stroke-opacity="0.16" stroke-width="1.6" fill="none"/><path d="M99 101.8 L126 135.5 L153 163.0 L180 185.4 L207 208.4" stroke="#25a825" stroke-opacity="0.23" stroke-width="0.8" fill="none"/><path d="M73 56.4 L99 85.2 L126 109.1 L153 130.6" stroke="#25a825" stroke-opacity="0.09" stroke-width="1.2" fill="none"/><path d="M73 60.8 L99 92.9" stroke="#25a825" stroke-opacity="0.30" stroke-width="0.8" fill="none"/><path d="M99 105.0 L126 142.1" stroke="#25a825" stroke-opacity="0.27" stroke-width="1.6" fill="none"/><path d="M180 189.2 L207 212.9 L234 230.4 L256 248.7" stroke="#25a825" stroke-opacity="0.35" stroke-width="0.8" fill="none"/><path d="M24 21.8 L46 39.8 L73 61.7 L99 90.5 L126 117.9" stroke="#25a825" stroke-opacity="0.30" stroke-width="1.6" fill="none"/><path d="M73 72.9 L99 108.6 L126 142.3 L153 167.8 L180 196.1" stroke="#25a825" stroke-opacity="0.33" stroke-width="0.8" fill="none"/><path d="M180 168.0 L207 188.1" stroke="#25a825" stroke-opacity="0.10" stroke-width="0.8" fill="none"/><path d="M46 40.0 L73 61.3 L99 89.0" stroke="#25a825" stroke-opacity="0.14" stroke-width="1" fill="none"/><path d="M73 64.1 L99 92.1" stroke="#25a825" stroke-opacity="0.11" stroke-width="1.6" fill="none"/><path d="M126 135.9 L153 158.0" stroke="#25a825" stroke-opacity="0.21" stroke-width="1" fill="none"/><path d="M46 35.9 L73 57.1 L99 83.7 L126 109.0" stroke="#25a825" stroke-opacity="0.37" stroke-width="1" fill="none"/><path d="M73 68.7 L99 100.8 L126 135.4 L153 157.8 L180 182.9 L207 203.1" stroke="#25a825" stroke-opacity="0.26" stroke-width="1.2" fill="none"/><path d="M126 140.7 L153 164.4 L180 189.9 L207 210.1 L234 230.2 L256 246.8" stroke="#25a825" stroke-opacity="0.09" stroke-width="1.2" fill="none"/><path d="M24 21.9 L46 36.2" stroke="#25a825" stroke-opacity="0.23" stroke-width="1.6" fill="none"/><path d="M207 210.8 L234 232.4 L256 250.5" stroke="#25a825" stroke-opacity="0.20" stroke-width="1" fill="none"/><path d="M180 194.5 L207 213.8 L234 236.5" stroke="#25a825" stroke-opacity="0.24" stroke-width="1" fill="none"/><path d="M180 158.6 L207 177.6 L234 206.0 L256 217.3" stroke="#25a825" stroke-opacity="0.33" stroke-width="1.6" fill="none"/><path d="M153 135.8 L180 156.9 L207 179.7 L234 204.3" stroke="#25a825" stroke-opacity="0.27" stroke-width="1" fill="none"/><path d="M180 182.7 L207 204.2" stroke="#25a825" stroke-opacity="0.14" stroke-width="0.8" fill="none"/><path d="M207 192.5 L234 217.5 L256 234.1" stroke="#25a825" stroke-opacity="0.28" stroke-width="1.6" fill="none"/><path d="M207 185.6 L234 211.9" stroke="#25a825" stroke-opacity="0.10" stroke-width="1.6" fill="none"/><path d="M207 212.2 L234 230.5 L256 251.2" stroke="#25a825" stroke-opacity="0.32" stroke-width="1" fill="none"/><path d="M24 21.9 L46 34.9 L73 59.3 L99 85.5" stroke="#25a825" stroke-opacity="0.30" stroke-width="1.6" fill="none"/><path d="M73 71.7 L99 103.7" stroke="#25a825" stroke-opacity="0.23" stroke-width="1" fill="none"/><path d="M73 67.5 L99 99.6" stroke="#25a825" stroke-opacity="0.15" stroke-width="0.8" fill="none"/><path d="M153 153.1 L180 178.2 L207 198.7 L234 224.4" stroke="#25a825" stroke-opacity="0.23" stroke-width="1" fill="none"/><path d="M99 88.8 L126 114.2" stroke="#25a825" stroke-opacity="0.39" stroke-width="0.8" fill="none"/><path d="M207 191.9 L234 214.7 L256 232.6" stroke="#25a825" stroke-opacity="0.35" stroke-width="1.2" fill="none"/><path d="M46 49.7 L73 72.0 L99 108.3" stroke="#25a825" stroke-opacity="0.10" stroke-width="1" fill="none"/><path d="M207 202.8 L234 221.7 L256 241.0" stroke="#25a825" stroke-opacity="0.22" stroke-width="0.8" fill="none"/><path d="M99 105.8 L126 140.9 L153 163.6" stroke="#25a825" stroke-opacity="0.15" stroke-width="1.2" fill="none"/><path d="M46 48.0 L73 68.3 L99 101.3 L126 138.2 L153 161.9 L180 186.4" stroke="#25a825" stroke-opacity="0.19" stroke-width="1.6" fill="none"/><path d="M180 177.2 L207 199.2 L234 222.4 L256 235.5" stroke="#25a825" stroke-opacity="0.22" stroke-width="1" fill="none"/><path d="M73 65.8 L99 98.4 L126 127.6 L153 151.3" stroke="#25a825" stroke-opacity="0.12" stroke-width="0.8" fill="none"/><path d="M46 43.5 L73 65.2 L99 94.4 L126 125.4 L153 147.3" stroke="#25a825" stroke-opacity="0.31" stroke-width="1.2" fill="none"/><path d="M46 47.0 L73 70.4" stroke="#25a825" stroke-opacity="0.32" stroke-width="0.8" fill="none"/><path d="M73 69.5 L99 104.1 L126 141.9 L153 166.9 L180 189.4 L207 211.4" stroke="#25a825" stroke-opacity="0.22" stroke-width="0.8" fill="none"/><path d="M180 186.1 L207 207.6 L234 228.5 L256 246.4" stroke="#25a825" stroke-opacity="0.30" stroke-width="1.2" fill="none"/><path d="M24 18.7 L46 37.4" stroke="#25a825" stroke-opacity="0.34" stroke-width="1.6" fill="none"/><path d="M24 24.4 L46 45.5 L73 69.6" stroke="#25a825" stroke-opacity="0.19" stroke-width="1" fill="none"/><path d="M73 65.4 L99 98.4" stroke="#25a825" stroke-opacity="0.28" stroke-width="1" fill="none"/><path d="M180 169.6 L207 191.8 L234 217.6 L256 230.4" stroke="#25a825" stroke-opacity="0.22" stroke-width="1.6" fill="none"/><path d="M73 57.7 L99 85.1 L126 107.8 L153 129.5 L180 154.6 L207 175.0" stroke="#25a825" stroke-opacity="0.15" stroke-width="0.8" fill="none"/><path d="M99 85.6 L126 108.6 L153 130.2 L180 151.3 L207 174.8" stroke="#25a825" stroke-opacity="0.18" stroke-width="1.2" fill="none"/><path d="M99 101.8 L126 135.3 L153 162.3 L180 186.8" stroke="#25a825" stroke-opacity="0.35" stroke-width="1.6" fill="none"/><path d="M73 64.7 L99 93.6 L126 121.0" stroke="#25a825" stroke-opacity="0.13" stroke-width="0.8" fill="none"/><path d="M126 137.1 L153 160.9 L180 184.8" stroke="#25a825" stroke-opacity="0.23" stroke-width="0.8" fill="none"/><path d="M180 185.4 L207 209.2" stroke="#25a825" stroke-opacity="0.28" stroke-width="1.6" fill="none"/><path d="M24 19.4 L46 34.8 L73 57.3 L99 85.3 L126 108.4 L153 131.8" stroke="#25a825" stroke-opacity="0.34" stroke-width="0.8" fill="none"/><path d="M180 177.0 L207 194.8 L234 220.5 L256 233.5" stroke="#25a825" stroke-opacity="0.17" stroke-width="0.8" fill="none"/><path d="M153 132.9 L180 156.0 L207 176.9 L234 201.5 L256 215.7" stroke="#25a825" stroke-opacity="0.17" stroke-width="1" fill="none"/><path d="M46 37.6 L73 58.9 L99 87.1 L126 111.6" stroke="#25a825" stroke-opacity="0.28" stroke-width="1" fill="none"/><path d="M46 40.7 L73 66.6" stroke="#25a825" stroke-opacity="0.25" stroke-width="1.6" fill="none"/><path d="M180 193.3 L207 217.2 L234 237.4 L256 256.2" stroke="#25a825" stroke-opacity="0.28" stroke-width="1.6" fill="none"/><path d="M153 143.8 L180 164.4 L207 186.1" stroke="#25a825" stroke-opacity="0.17" stroke-width="0.8" fill="none"/><path d="M73 71.9 L99 106.6" stroke="#25a825" stroke-opacity="0.15" stroke-width="0.8" fill="none"/><path d="M180 175.6 L207 198.1 L234 221.0 L256 235.2" stroke="#25a825" stroke-opacity="0.21" stroke-width="0.8" fill="none"/><path d="M153 153.5 L180 176.8 L207 199.0" stroke="#25a825" stroke-opacity="0.26" stroke-width="1" fill="none"/><path d="M153 145.2 L180 171.7 L207 191.3 L234 213.8 L256 231.8" stroke="#25a825" stroke-opacity="0.12" stroke-width="0.8" fill="none"/><path d="M207 188.4 L234 210.0 L256 225.4" stroke="#25a825" stroke-opacity="0.35" stroke-width="1.6" fill="none"/><path d="M24 24.9 L46 45.2 L73 69.8" stroke="#25a825" stroke-opacity="0.20" stroke-width="0.8" fill="none"/><path d="M207 199.7 L234 222.1 L256 237.3" stroke="#25a825" stroke-opacity="0.38" stroke-width="0.8" fill="none"/><path d="M46 38.9 L73 62.3 L99 92.6" stroke="#25a825" stroke-opacity="0.30" stroke-width="0.8" fill="none"/><path d="M207 181.3 L234 210.3 L256 223.2" stroke="#25a825" stroke-opacity="0.12" stroke-width="0.8" fill="none"/><path d="M153 149.3 L180 175.0" stroke="#25a825" stroke-opacity="0.31" stroke-width="0.8" fill="none"/><path d="M207 178.4 L234 202.2 L256 214.7" stroke="#25a825" stroke-opacity="0.13" stroke-width="1.6" fill="none"/><path d="M46 42.4 L73 66.9 L99 101.2 L126 130.0 L153 155.1 L180 178.8" stroke="#25a825" stroke-opacity="0.40" stroke-width="1.2" fill="none"/><path d="M46 43.4 L73 66.0 L99 99.9" stroke="#25a825" stroke-opacity="0.40" stroke-width="1.6" fill="none"/><path d="M99 104.3 L126 138.2" stroke="#25a825" stroke-opacity="0.11" stroke-width="1" fill="none"/><path d="M24 20.8 L46 39.9" stroke="#25a825" stroke-opacity="0.20" stroke-width="0.8" fill="none"/><path d="M99 87.2 L126 109.7 L153 131.1" stroke="#25a825" stroke-opacity="0.11" stroke-width="1.2" fill="none"/><path d="M207 197.6 L234 220.4 L256 238.6" stroke="#25a825" stroke-opacity="0.24" stroke-width="0.8" fill="none"/><path d="M180 162.0 L207 183.2 L234 206.9 L256 221.5" stroke="#25a825" stroke-opacity="0.08" stroke-width="1" fill="none"/><path d="M73 72.4 L99 105.1 L126 142.9 L153 167.5" stroke="#25a825" stroke-opacity="0.15" stroke-width="1.6" fill="none"/><path d="M73 59.5 L99 86.6 L126 115.6 L153 137.9 L180 160.6" stroke="#25a825" stroke-opacity="0.10" stroke-width="1.6" fill="none"/><path d="M180 151.4 L207 171.7 L234 201.7" stroke="#25a825" stroke-opacity="0.39" stroke-width="1.6" fill="none"/><path d="M99 89.0 L126 114.8" stroke="#25a825" stroke-opacity="0.09" stroke-width="1" fill="none"/><path d="M46 44.9 L73 70.6 L99 102.8 L126 136.9" stroke="#25a825" stroke-opacity="0.17" stroke-width="0.8" fill="none"/><path d="M46 38.5 L73 61.0 L99 90.7 L126 118.8 L153 142.5" stroke="#25a825" stroke-opacity="0.16" stroke-width="1" fill="none"/><path d="M24 19.8 L46 38.6 L73 62.0 L99 88.3 L126 118.8" stroke="#25a825" stroke-opacity="0.21" stroke-width="1" fill="none"/><path d="M24 22.9 L46 46.9 L73 71.2 L99 104.1 L126 137.6 L153 161.3" stroke="#25a825" stroke-opacity="0.11" stroke-width="0.8" fill="none"/><path d="M153 167.0 L180 193.5 L207 216.3 L234 235.9 L256 254.5" stroke="#25a825" stroke-opacity="0.18" stroke-width="1" fill="none"/><path d="M46 41.5 L73 65.3 L99 98.7 L126 128.3 L153 153.3" stroke="#25a825" stroke-opacity="0.34" stroke-width="1.2" fill="none"/><path d="M73 69.7 L99 103.9 L126 139.0 L153 161.8 L180 188.2" stroke="#25a825" stroke-opacity="0.10" stroke-width="0.8" fill="none"/><path d="M73 60.7 L99 85.9 L126 111.4 L153 134.9" stroke="#25a825" stroke-opacity="0.32" stroke-width="1.2" fill="none"/><path d="M24 20.8 L46 39.0 L73 60.0 L99 89.1" stroke="#25a825" stroke-opacity="0.36" stroke-width="1.6" fill="none"/></g><path d="M0 0 L24 20" stroke="#1a7a1a" stroke-width="1"/><rect x="0" y="0" width="256" height="1" fill="#0a6a0a"/><rect x="0" y="0" width="1" height="256" fill="#0a5a0a"/></svg>
</body></html>
